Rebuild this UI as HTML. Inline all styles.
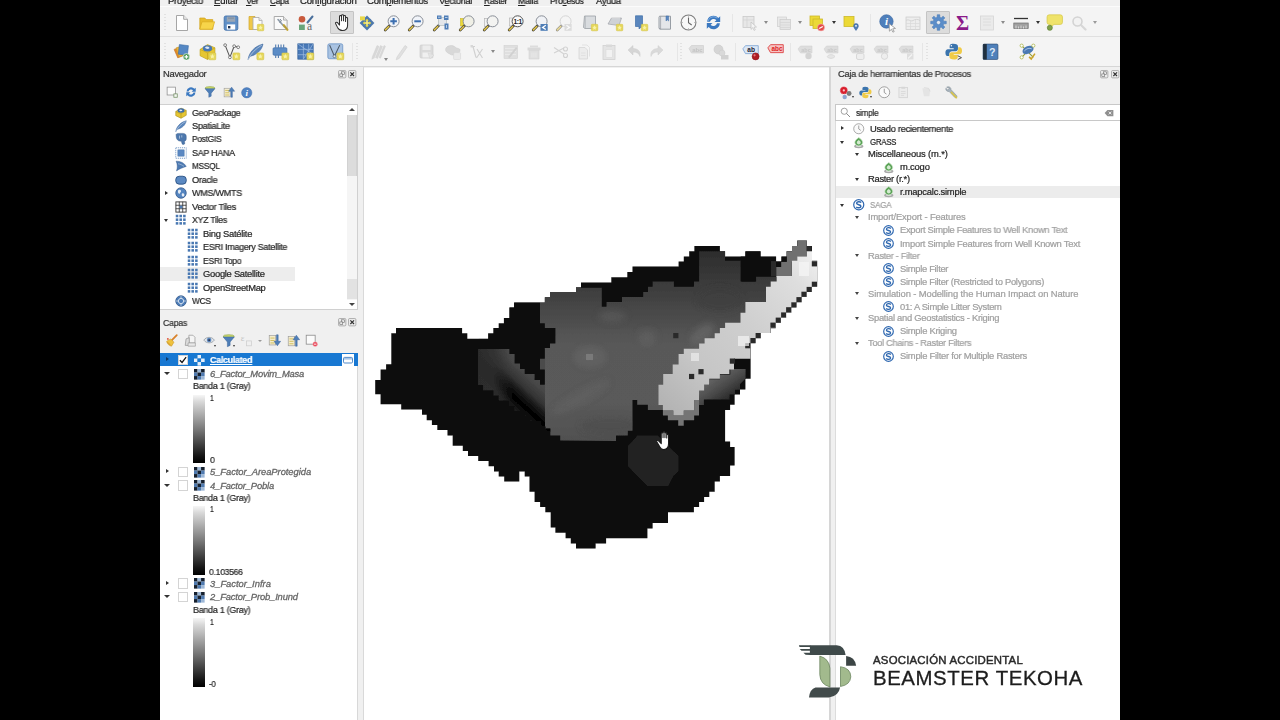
<!DOCTYPE html>
<html lang="es">
<head>
<meta charset="utf-8">
<title>QGIS</title>
<style>
html,body{margin:0;padding:0;background:#000;}
body{width:1280px;height:720px;overflow:hidden;position:relative;font-family:"Liberation Sans","DejaVu Sans",sans-serif;font-size:10px;color:#1e1e1e;}
#app{position:absolute;left:160px;top:0;width:960px;height:720px;background:#f0f0f0;overflow:hidden;}
.a{position:absolute;}
.t{position:absolute;white-space:nowrap;color:#262626;-webkit-text-stroke:0.22px currentColor;will-change:transform;}
.menu{color:#222;}
.menu u{text-decoration-thickness:1px;text-underline-offset:1px;}
.ttl{color:#333;}
.g{color:#a0a0a0;}
.it{font-style:italic;color:#666;-webkit-text-stroke:0.3px #666;}
.ic{position:absolute;width:16px;height:16px;overflow:visible;}
.ad{position:absolute;width:0;height:0;border-left:2.5px solid transparent;border-right:2.5px solid transparent;border-top:3px solid #333;}
.ar{position:absolute;width:0;height:0;border-top:2.5px solid transparent;border-bottom:2.5px solid transparent;border-left:3px solid #333;}
.cb{position:absolute;width:11px;height:11px;background:#fff;border:1px solid #ccc;box-sizing:border-box;}
.gr{position:absolute;left:33px;width:12px;background:linear-gradient(#f2f2f2,#000);}
</style>
</head>

<body>
<div id="app">
<!-- menu / toolbar separators -->
<div class="a" style="left:0;top:6.6px;width:960px;height:60px;background:#f4f4f4"></div>
<div class="a" style="left:0;top:6.4px;width:960px;height:1px;background:#fbfbfb"></div>
<div class="a" style="left:0;top:35.8px;width:960px;height:1.2px;background:#e0e0e0"></div>
<div class="a" style="left:0;top:65.8px;width:960px;height:1.4px;background:#d6d6d6"></div>
<!-- active tool highlights -->
<div class="a" style="left:170.4px;top:10.9px;width:23.7px;height:23.3px;background:#dcdcdc;border:1px solid #c4c4c4;box-sizing:border-box;border-radius:1px"></div>
<div class="a" style="left:765.9px;top:11px;width:24.2px;height:23.2px;background:#dcdcdc;border:1px solid #c4c4c4;box-sizing:border-box;border-radius:1px"></div>
<!-- navegador tree -->
<div class="a" style="left:0;top:104.2px;width:197.7px;height:205.5px;background:#fff;border:1px solid #d0d0d0;border-left:none;box-sizing:border-box"></div>
<div class="a" style="left:0;top:267.4px;width:135.4px;height:13.2px;background:#ededed"></div>
<div class="a" style="left:187.4px;top:114.6px;width:9.6px;height:185px;background:#f5f5f5"></div>
<div class="a" style="left:187.4px;top:114.6px;width:9.6px;height:61.8px;background:#dcdcdc;border-left:1px solid #d2d2d2;border-right:1px solid #d2d2d2;box-sizing:border-box"></div>
<div class="a" style="left:189px;top:108.4px;width:0;height:0;border-left:3.2px solid transparent;border-right:3.2px solid transparent;border-bottom:3px solid #444"></div>
<div class="a" style="left:189px;top:303px;width:0;height:0;border-left:3.2px solid transparent;border-right:3.2px solid transparent;border-top:3px solid #444"></div>
<div class="a" style="left:187.4px;top:278.6px;width:9.6px;height:20.6px;background:#e2e2e2"></div>
<!-- capas tree -->
<div class="a" style="left:0;top:352.5px;width:197.7px;height:368px;background:#fff;border-top:1px solid #d0d0d0;border-right:1px solid #d8d8d8;box-sizing:border-box"></div>
<div class="a" style="left:0;top:353px;width:197.7px;height:13.3px;background:#1878d2"></div>
<!-- canvas -->
<div class="a" style="left:202.5px;top:67px;width:1.3px;height:653px;background:#d9d9d9"></div>
<div class="a" style="left:203.8px;top:67.6px;width:465.4px;height:653px;background:#fff"></div>
<div class="a" style="left:669.2px;top:67px;width:1.4px;height:653px;background:#d6d6d6"></div>
<!-- toolbox -->
<div class="a" style="left:674.6px;top:104.2px;width:286px;height:16.6px;background:#fff;border:1px solid #c8c8c8;box-sizing:border-box"></div>
<div class="a" style="left:674.6px;top:120.6px;width:286px;height:600px;background:#fff;border-left:1px solid #dcdcdc;box-sizing:border-box"></div>
<div class="a" style="left:675.5px;top:185.6px;width:285px;height:12.9px;background:#ececec"></div>

<!-- map raster -->
<svg class="a" style="left:0;top:0" width="960" height="720" viewBox="160 0 960 720">
<defs>
<linearGradient id="gG" gradientUnits="userSpaceOnUse" x1="0" y1="250" x2="0" y2="441">
<stop offset="0" stop-color="#2c2c2c"/><stop offset="0.22" stop-color="#3f3f3f"/><stop offset="0.5" stop-color="#595959"/><stop offset="0.8" stop-color="#5a5a5a"/><stop offset="1" stop-color="#505050"/>
</linearGradient>
<linearGradient id="gL" gradientUnits="userSpaceOnUse" x1="512" y1="412" x2="540.8" y2="380.4">
<stop offset="0" stop-color="#1e1e1e"/><stop offset="0.1" stop-color="#1a1a1a"/><stop offset="0.24" stop-color="#060606"/><stop offset="0.34" stop-color="#060606"/><stop offset="0.48" stop-color="#1a1a1a"/><stop offset="0.62" stop-color="#343434"/><stop offset="0.85" stop-color="#464646"/><stop offset="1" stop-color="#4c4c4c"/>
</linearGradient>
<linearGradient id="gW" gradientUnits="userSpaceOnUse" x1="665" y1="405" x2="812" y2="252">
<stop offset="0" stop-color="#b4b4b4"/><stop offset="0.25" stop-color="#c6c6c6"/><stop offset="0.55" stop-color="#cfcfcf"/><stop offset="0.85" stop-color="#dedede"/><stop offset="1" stop-color="#f0f0f0"/>
</linearGradient>
<linearGradient id="gR" gradientUnits="userSpaceOnUse" x1="712" y1="376" x2="730" y2="402">
<stop offset="0" stop-color="#666"/><stop offset="0.45" stop-color="#4c4c4c"/><stop offset="1" stop-color="#222"/>
</linearGradient>
<linearGradient id="gL2" gradientUnits="userSpaceOnUse" x1="478" y1="0" x2="512" y2="0">
<stop offset="0" stop-color="#2c2c2c" stop-opacity="1"/><stop offset="0.45" stop-color="#303030" stop-opacity=".85"/><stop offset="1" stop-color="#363636" stop-opacity="0"/>
</linearGradient>
<clipPath id="cO"><polygon points="375.2,380 380.6,380 380.6,369.4 386.1,369.4 386.1,364.2 391.3,364.2 391.3,333.2 396,333.2 396,328 462.1,328 462.1,333.2 467.3,333.2 467.3,338.7 488.1,338.7 488.1,333.2 493.3,333.2 493.3,328 498.7,328 498.7,323.3 503.9,323.3 503.9,317.9 509.4,317.9 509.4,307.5 514.1,307.5 514.1,302.5 544.8,302.5 544.8,297.3 550,297.3 550,291.9 576,291.9 576,287.2 581,287.2 581,282.4 611.3,282.4 611.3,277.2 627.3,277.2 627.3,272 632.5,272 632.5,266.6 678.6,266.6 678.6,261.4 683.8,261.4 683.8,256.5 689.2,256.5 689.2,251.3 694.4,251.3 694.4,246.1 719.9,246.1 719.9,251.3 725.1,251.3 725.1,256.5 745.4,256.5 745.4,251.3 760.6,251.3 760.6,256.5 776.1,256.5 776.1,261.4 781.3,261.4 781.3,256.5 786.5,256.5 786.5,251.3 792,251.3 792,246.1 797.2,246.1 797.2,240.6 806.9,240.6 806.9,246.1 812,246.1 812,260.7 817.2,260.7 817.2,286.7 812,286.7 812,291.9 806.9,291.9 806.9,297.1 801.7,297.1 801.7,302.3 796.5,302.3 796.5,307.5 791.3,307.5 791.3,312.7 786.1,312.7 786.1,317.9 780.9,317.9 780.9,323.1 775.7,323.1 775.7,328.3 770.5,328.3 770.5,333 760.8,333 760.8,338.2 755.6,338.2 755.6,343.2 750.6,343.2 750.6,378.8 745.4,378.8 745.4,389.4 740,389.4 740,394.6 734.6,394.6 734.6,404.8 730.1,404.8 730.1,410 725.1,410 725.1,441.4 730.1,441.4 730.1,446.9 734.6,446.9 734.6,465.5 730.1,465.5 730.1,476.1 719.9,476.1 719.9,481.6 714.7,481.6 714.7,491.7 709.3,491.7 709.3,496.9 704.1,496.9 704.1,502.1 699.1,502.1 699.1,507.1 693.9,507.1 693.9,512.3 668,512.3 668,522.9 652.6,522.9 652.6,528.4 647.4,528.4 647.4,538.3 606.1,538.3 606.1,543.5 595.6,543.5 595.6,548.5 576,548.5 576,543.5 570.8,543.5 570.8,538.3 565.6,538.3 565.6,532.8 555.4,532.8 555.4,527.6 550.7,527.6 550.7,512.3 545.3,512.3 545.3,507.1 540.1,507.1 540.1,502.1 534.6,502.1 534.6,491.7 529.5,491.7 529.5,476.4 524.7,476.4 524.7,471.4 519.3,471.4 519.3,481.6 504.2,481.6 504.2,476.4 498.7,476.4 498.7,471.4 494,471.4 494,466.2 488.6,466.2 488.6,461 478.2,461 478.2,456.1 468,456.1 468,450.9 462.8,450.9 462.8,445.7 452.7,445.7 452.7,435.5 447.5,435.5 447.5,430.1 437.3,430.1 437.3,424.9 431.9,424.9 431.9,420.2 426.7,420.2 426.7,414.7 422,414.7 422,409.5 401.2,409.5 401.2,404.3 380.6,404.3 380.6,394.2 375.2,394.2"/></clipPath>
<filter id="fS" x="-30%" y="-30%" width="160%" height="160%"><feGaussianBlur stdDeviation="3.5"/></filter>
<filter id="fB" x="-2%" y="-2%" width="104%" height="104%"><feGaussianBlur stdDeviation="0.45"/></filter>
<clipPath id="cG"><polygon points="540,302.5 544.8,302.5 544.8,297.3 550,297.3 550,291.9 576,291.9 576,287.7 601.8,287.7 601.8,306.8 606.5,306.8 606.5,302 621.9,302 621.9,296.9 643.2,296.9 643.2,291.9 647.9,291.9 647.9,286.7 652.6,286.7 652.6,281.5 673.9,281.5 673.9,286.7 693.9,286.7 693.9,281.5 699.1,281.5 699.1,251.3 719.9,251.3 725.1,251.3 725.1,260.7 741.2,260.7 741.2,281.5 755.4,281.5 755.4,276.5 776.6,276.5 776.6,300 745,326 705,356 680,392 670,408 663.2,410 647.9,410 647.9,404.8 637.2,404.8 637.2,400 632.5,400 632.5,430.8 627.8,430.8 627.8,435.5 616,435.5 616,441 560.2,440.6 560.2,435.6 550.3,435.6 550.3,428.4 545,428.4 545,384 540,384 540,330"/></clipPath>
</defs>
<g filter="url(#fB)">
<!-- outline -->
<polygon id="mO" fill="#0b0b0b" points="375.2,380 380.6,380 380.6,369.4 386.1,369.4 386.1,364.2 391.3,364.2 391.3,333.2 396,333.2 396,328 462.1,328 462.1,333.2 467.3,333.2 467.3,338.7 488.1,338.7 488.1,333.2 493.3,333.2 493.3,328 498.7,328 498.7,323.3 503.9,323.3 503.9,317.9 509.4,317.9 509.4,307.5 514.1,307.5 514.1,302.5 544.8,302.5 544.8,297.3 550,297.3 550,291.9 576,291.9 576,287.2 581,287.2 581,282.4 611.3,282.4 611.3,277.2 627.3,277.2 627.3,272 632.5,272 632.5,266.6 678.6,266.6 678.6,261.4 683.8,261.4 683.8,256.5 689.2,256.5 689.2,251.3 694.4,251.3 694.4,246.1 719.9,246.1 719.9,251.3 725.1,251.3 725.1,256.5 745.4,256.5 745.4,251.3 760.6,251.3 760.6,256.5 776.1,256.5 776.1,261.4 781.3,261.4 781.3,256.5 786.5,256.5 786.5,251.3 792,251.3 792,246.1 797.2,246.1 797.2,240.6 806.9,240.6 806.9,246.1 812,246.1 812,260.7 817.2,260.7 817.2,286.7 812,286.7 812,291.9 806.9,291.9 806.9,297.1 801.7,297.1 801.7,302.3 796.5,302.3 796.5,307.5 791.3,307.5 791.3,312.7 786.1,312.7 786.1,317.9 780.9,317.9 780.9,323.1 775.7,323.1 775.7,328.3 770.5,328.3 770.5,333 760.8,333 760.8,338.2 755.6,338.2 755.6,343.2 750.6,343.2 750.6,378.8 745.4,378.8 745.4,389.4 740,389.4 740,394.6 734.6,394.6 734.6,404.8 730.1,404.8 730.1,410 725.1,410 725.1,441.4 730.1,441.4 730.1,446.9 734.6,446.9 734.6,465.5 730.1,465.5 730.1,476.1 719.9,476.1 719.9,481.6 714.7,481.6 714.7,491.7 709.3,491.7 709.3,496.9 704.1,496.9 704.1,502.1 699.1,502.1 699.1,507.1 693.9,507.1 693.9,512.3 668,512.3 668,522.9 652.6,522.9 652.6,528.4 647.4,528.4 647.4,538.3 606.1,538.3 606.1,543.5 595.6,543.5 595.6,548.5 576,548.5 576,543.5 570.8,543.5 570.8,538.3 565.6,538.3 565.6,532.8 555.4,532.8 555.4,527.6 550.7,527.6 550.7,512.3 545.3,512.3 545.3,507.1 540.1,507.1 540.1,502.1 534.6,502.1 534.6,491.7 529.5,491.7 529.5,476.4 524.7,476.4 524.7,471.4 519.3,471.4 519.3,481.6 504.2,481.6 504.2,476.4 498.7,476.4 498.7,471.4 494,471.4 494,466.2 488.6,466.2 488.6,461 478.2,461 478.2,456.1 468,456.1 468,450.9 462.8,450.9 462.8,445.7 452.7,445.7 452.7,435.5 447.5,435.5 447.5,430.1 437.3,430.1 437.3,424.9 431.9,424.9 431.9,420.2 426.7,420.2 426.7,414.7 422,414.7 422,409.5 401.2,409.5 401.2,404.3 380.6,404.3 380.6,394.2 375.2,394.2"/>
<g clip-path="url(#cO)">
<!-- main grey -->
<polygon fill="url(#gG)" points="540,302.5 544.8,302.5 544.8,297.3 550,297.3 550,291.9 576,291.9 576,287.7 601.8,287.7 601.8,306.8 606.5,306.8 606.5,302 621.9,302 621.9,296.9 643.2,296.9 643.2,291.9 647.9,291.9 647.9,286.7 652.6,286.7 652.6,281.5 673.9,281.5 673.9,286.7 693.9,286.7 693.9,281.5 699.1,281.5 699.1,251.3 719.9,251.3 725.1,251.3 725.1,260.7 741.2,260.7 741.2,281.5 755.4,281.5 755.4,276.5 776.6,276.5 776.6,300 745,326 705,356 680,392 670,408 663.2,410 647.9,410 647.9,404.8 637.2,404.8 637.2,400 632.5,400 632.5,430.8 627.8,430.8 627.8,435.5 616,435.5 616,441 560.2,440.6 560.2,435.6 550.3,435.6 550.3,428.4 545,428.4 545,384 540,384 540,330"/>
<g clip-path="url(#cG)"><g filter="url(#fS)" opacity=".9">
<ellipse cx="590" cy="357" rx="16" ry="10" fill="#6c6c6c" opacity=".55"/>
<ellipse cx="612" cy="316" rx="14" ry="6" fill="#646464" opacity=".5"/>
<ellipse cx="647" cy="337" rx="9" ry="8" fill="#6a6a6a" opacity=".5"/>
<ellipse cx="580" cy="398" rx="34" ry="6" transform="rotate(-30 580 398)" fill="#666" opacity=".5"/>
<ellipse cx="702" cy="334" rx="14" ry="7" transform="rotate(-40 702 334)" fill="#727272" opacity=".6"/>
<ellipse cx="610" cy="425" rx="30" ry="9" fill="#4a4a4a" opacity=".5"/>
<ellipse cx="720" cy="300" rx="22" ry="12" fill="#3c3c3c" opacity=".5"/>
</g></g>
<!-- left lobe -->
<polygon fill="url(#gL)" points="478,348.9 545,348.9 545,428.4 550.3,428.4 550.3,435.6 550.3,431.8 545.6,431.8 545.6,426.6 540.4,426.6 540.4,421.4 530,421.4 530,416.2 524.8,416.2 524.8,411 514.4,411 514.4,405.8 509.2,405.8 509.2,400.6 498.8,400.6 498.8,395.4 493.6,395.4 493.6,390.2 483.2,390.2 483.2,385 478,385"/>
<polygon fill="url(#gL2)" points="478,348.9 512,348.9 512,400.6 509.2,400.6 498.8,400.6 498.8,395.4 493.6,395.4 493.6,390.2 483.2,390.2 483.2,385 478,385"/>
<!-- black wedge -->
<polygon fill="#0c0c0c" points="509.4,302.5 540,302.5 540,323.3 544.8,323.3 544.8,328 555.4,328 555.4,343.4 550,343.4 550,348 544.8,348 544.8,358.7 540,358.7 540,369.4 544.8,369.4 544.8,384.7 540,384.7 540,380 534.6,380 534.6,374 524.7,374 524.7,369 520,369 520,363.5 514.6,363.5 514.6,354 509.4,354 509.4,348 478.7,348 478.7,338.7 509.4,338.7"/>
<!-- grey band right of strip -->
<polygon fill="url(#gR)" points="699,405 699,389.7 703.9,389.7 703.9,384.9 709.4,384.9 709.4,379.3 719.9,379.3 719.9,374.4 730.3,374.4 730.3,368.9 745.6,368.9 745.6,378.6 740,384.2 740,389.7 735.1,389.7 735.1,394.6 729.6,394.6 729.6,399.4 703.9,399.4 703.9,405"/>
<path fill="#747474" d="M662.9,410.6H673.3V415.4H662.9ZM683.7,410.5H694.2V415.5H683.7ZM667.8,415.4H694.2V420.3H667.8ZM678.2,420.3H683.75V425.8H678.2ZM694.2,400.1H699V415.4H694.2Z"/>
<!-- top-right tip: grey part of the strip head -->
<polygon fill="#707070" points="797.2,240.6 806.9,240.6 806.9,256.7 797.2,256.7 797.2,261.8 791.9,261.8 791.9,277 776.1,277 776.1,267 781.1,267 781.1,261.8 786.7,261.8 786.7,251.3 791.9,251.3 791.9,246.1 797.2,246.1"/>
<!-- black top-right block -->
<polygon fill="#0f0f0f" points="740.6,251.3 760.6,251.3 760.6,256.7 776.1,256.7 776.1,261.1 781.7,261.1 781.7,256.5 786.7,256.5 786.7,261.8 781.1,261.8 781.1,267 776.1,267 776.1,276.4 756.1,276.4 756.1,281.4 740.6,281.4"/>
<rect x="770.9" y="261.1" width="5.2" height="15.3" fill="#2a2a2a"/>
<!-- bright strip -->
<polygon fill="url(#gW)" points="658.5,404.8 658.5,384.7 663.2,384.7 663.2,374.1 672.7,374.1 672.7,364.6 678.6,364.6 678.6,354 683.8,354 683.8,348.8 699.1,348.8 699.1,343.4 704.6,343.4 704.6,338.2 714.7,338.2 714.7,333.2 719.9,333.2 719.9,328 725.1,328 725.1,322.8 740.5,322.8 740.5,312.7 745.4,312.7 745.4,302 766,302 766,286.7 770.7,286.7 770.7,281.5 776.6,281.5 776.6,276 792,276 792,260.7 797.2,260.7 797.2,256.5 806.9,256.5 806.9,251.3 812,251.3 812,260.7 817.2,260.7 817.2,286.7 812,286.7 812,291.9 806.9,291.9 806.9,297.1 801.7,297.1 801.7,302.3 796.5,302.3 796.5,307.5 791.3,307.5 791.3,312.7 786.1,312.7 786.1,317.9 780.9,317.9 780.9,323.1 775.7,323.1 775.7,328.3 770.5,328.3 770.5,333 760.8,333 760.8,338.2 755.6,338.2 755.6,343.2 750.6,343.2 750.6,358.7 734,358.7 734,369.4 729.4,369.4 729.4,374.1 719.9,374.1 719.9,378.8 709.3,378.8 709.3,384.7 704.1,384.7 704.1,390.6 699.1,390.6 699,400.1 694.2,400.1 694.2,410.6 683.75,410.6 683.75,415.4 673.3,415.4 673.3,410.6 662.9,410.6 662.9,405 658.5,405"/>
<!-- lighter blob -->
<polygon fill="#232323" points="637.5,435.5 658,435.5 663,441 673.5,451 678.6,456 678.6,471 673.5,476 668,486.3 647.5,486.3 642.5,481 632.5,471 627.8,466 627.8,446 632.5,441"/>
<!-- speckles -->
<g fill="#2a2a2a">
<rect x="673.2" y="333" width="5.2" height="5.2"/><rect x="698.4" y="369.1" width="5.2" height="5.2"/><rect x="689" y="373.9" width="5.2" height="5.2"/><rect x="729.8" y="358.5" width="5.2" height="5.2"/>
<rect x="806.6" y="245.8" width="5.2" height="5.2"/><rect x="811.8" y="261.2" width="5.2" height="5.2"/><rect x="811.8" y="281.7" width="5.2" height="5.2"/><rect x="806.6" y="286.9" width="5.2" height="5.2"/><rect x="801.4" y="291.7" width="5.2" height="5.2"/><rect x="796.4" y="297.1" width="5.2" height="5.2"/><rect x="791.3" y="302.3" width="5.2" height="5.2"/><rect x="786.1" y="307.2" width="5.2" height="5.2"/><rect x="781.1" y="312.4" width="5.2" height="5.2"/><rect x="775.7" y="317.6" width="5.2" height="5.2"/><rect x="770.4" y="322.6" width="5.2" height="5.2"/><rect x="755.6" y="333" width="5.2" height="5.2"/><rect x="750.4" y="338" width="5.2" height="5.2"/><rect x="745.2" y="343.1" width="5.2" height="5.2"/>
</g>
<!-- bright spots -->
<g fill="#f4f4f4"><rect x="799" y="262" width="10" height="14" opacity=".8"/><rect x="738" y="336" width="11" height="10" opacity=".7"/><rect x="691" y="353" width="8" height="8" opacity=".6"/></g>
<rect x="586" y="354" width="7" height="6" fill="#7a7a7a"/>
</g>
</g>
<!-- cursor hand -->
<g transform="translate(656.2,431.6) scale(1.2)">
<path d="M4.2,5.6V1.6c0-.9 1.5-.9 1.5,0V5V.9c0-.9 1.6-.9 1.6,0V5V1.5c0-.9 1.5-.9 1.5,0V5.4V3c0-.9 1.5-.9 1.5,0V10c0,3-1.4,5-3.9,5S3.5,13.6 2.6,12L.6,8.6C.1,7.6 1.3,7 2,7.8L4.2,10Z" fill="#fff" stroke="#1a1a1a" stroke-width=".9" stroke-linejoin="round"/>
</g>
</svg>

<!-- toolbar icons -->
<div class="a" style="left:3.5px;top:13.6px;width:2px;height:18px;background:repeating-linear-gradient(#e2e2e2 0 1px,transparent 1px 3px)"></div>
<div class="a" style="left:3.5px;top:42.8px;width:2px;height:18px;background:repeating-linear-gradient(#e2e2e2 0 1px,transparent 1px 3px)"></div>
<svg class="ic" style="left:13.7px;top:14.6px;width:16px;height:16px;" viewBox="0 0 16 16"><path d="M2.5,.5h7.2l3.8,3.8v11.2h-11z" fill="#fff" stroke="#9c9c9c" stroke-width=".9"/><path d="M9.7,.5v3.8h3.8" fill="#ededed" stroke="#9c9c9c" stroke-width=".9"/></svg>
<svg class="ic" style="left:38.9px;top:14.6px;width:16px;height:16px;" viewBox="0 0 16 16"><path d="M.8,3h5l1.4,1.6h6.6v9.6h-13z" fill="#e9bd2c" stroke="#d1a21a" stroke-width=".7"/><path d="M.8,14.2l2.2-7.4h12.6l-2.2,7.4z" fill="#f7d54a" stroke="#d8ab20" stroke-width=".7"/></svg>
<svg class="ic" style="left:63.2px;top:14.6px;width:16px;height:16px;" viewBox="0 0 16 16"><rect x="1.2" y="1" width="13.6" height="14.2" rx="1.6" fill="#5f8fc6" stroke="#3f70aa" stroke-width=".9"/><rect x="3.8" y="1.6" width="8.4" height="5.2" fill="#98a6b6"/><rect x="5" y="2.6" width="6" height="1" fill="#7d8c9e"/><rect x="3.8" y="9.4" width="8.4" height="5.2" fill="#fff"/><rect x="5" y="11" width="2.4" height="2.4" fill="#1f3352"/></svg>
<svg class="ic" style="left:87.6px;top:14.6px;width:16px;height:16px;" viewBox="0 0 16 16"><path d="M1,1.5h6v3h1v10h-7z" fill="#efc84a" stroke="#d0a528" stroke-width=".7"/><path d="M5,2.5h6l3,3v9h-9z" fill="#fbfbfb" stroke="#a8a8a8" stroke-width=".8"/><path d="M11,2.5v3h3" fill="#e8e8e8" stroke="#a8a8a8" stroke-width=".7"/><rect x="9.3" y="9.3" width="6.5" height="6.5" rx=".8" fill="#e6d75a" stroke="#d2c040" stroke-width=".5"/><path d="M12.55,10.2l.7,1.5 1.6.2-1.2,1.1.3,1.7-1.4-.8-1.4.8.3-1.7-1.2-1.1 1.6-.2z" fill="#f8f2a8"/></svg>
<svg class="ic" style="left:112.7px;top:14.6px;width:16px;height:16px;" viewBox="0 0 16 16"><path d="M1.2,1.5h9.3l3.6,3.6v9.4h-12.9z" fill="#fafafa" stroke="#a2a2a2" stroke-width=".9"/><path d="M10.5,1.5v3.6h3.6" fill="#e6e6e6" stroke="#a2a2a2" stroke-width=".8"/><path d="M5,4.5l6.5,7.5" stroke="#8c9aa8" stroke-width="1.6" stroke-linecap="round"/><path d="M7,4l1.5,2-2,1.5" fill="none" stroke="#7a8794" stroke-width="1"/><path d="M10.8,10.2l3.6,4.6" stroke="#c8ac42" stroke-width="2.2" stroke-linecap="round"/><path d="M10.8,10.2l3.6,4.6" stroke="#8a7a32" stroke-width=".5"/></svg>
<svg class="ic" style="left:137.5px;top:14.6px;width:16px;height:16px;" viewBox="0 0 16 16"><circle cx="4" cy="4.2" r="3.3" fill="#c85a3c"/><rect x="1" y="9.6" width="5.8" height="5.4" fill="#6aa57a"/><path d="M9.5,7.5l5-6" stroke="#4a6f9c" stroke-width="2" stroke-linecap="round"/><text x="9" y="15.4" font-family="Liberation Serif,serif" font-size="11.5" fill="#666">a</text></svg>
<svg class="ic" style="left:174.1px;top:14.1px;width:17px;height:17px;" viewBox="0 0 16 16"><path d="M5.2,7V2.4c0-1.2 1.9-1.2 1.9,0V6.4 1.5c0-1.2 1.9-1.2 1.9,0V6.4 2.2c0-1.2 1.9-1.2 1.9,0V7 4.1c0-1.2 1.9-1.2 1.9,0V10.6c0,3.4-1.8,5-4.8,5-2.6,0-3.7-1.2-4.7-3L1.6,9.2C.9,8 2.400,7.200 3.300,8.200L5.200,10.400Z" fill="#fff" stroke="#2b2b2b" stroke-width=".95" stroke-linejoin="round"/></svg>
<svg class="ic" style="left:199.0px;top:14.6px;width:16px;height:16px;" viewBox="0 0 16 16"><path d="M8,.6L15.400,8 8,15.400.6,8Z" fill="#4e79ad"/><path d="M8,3.800L12.200,8 8,12.200 3.800,8Z" fill="#e9d84a"/><path d="M4.300,4.300L8,8M11.700,4.300L8,8M4.300,11.700L8,8M11.700,11.700L8,8" stroke="#4e79ad" stroke-width="1.600"/><rect x="1" y="1.400" width="5" height="4" fill="#e9d84a"/><path d="M8,5.800L10.200,8 8,10.200 5.800,8Z" fill="#f3ea86"/></svg>
<svg class="ic" style="left:223.7px;top:14.6px;width:16px;height:16px;" viewBox="0 0 16 16"><path d="M1.2,15l4.6-4.6" stroke="#2a2a2a" stroke-width="2.6" stroke-linecap="round"/><path d="M1.3,14.9l3.4-3.4" stroke="#e0c44a" stroke-width="1.7" stroke-linecap="round"/><circle cx="9.6" cy="6.3" r="5.5" fill="#f1f4f9" stroke="#8a8f98" stroke-width="1"/><path d="M9.6,3v6.600M6.300,6.300h6.600" stroke="#3d6fb0" stroke-width="2"/></svg>
<svg class="ic" style="left:248.0px;top:14.6px;width:16px;height:16px;" viewBox="0 0 16 16"><path d="M1.2,15l4.6-4.6" stroke="#2a2a2a" stroke-width="2.6" stroke-linecap="round"/><path d="M1.3,14.9l3.4-3.4" stroke="#e0c44a" stroke-width="1.7" stroke-linecap="round"/><circle cx="9.6" cy="6.3" r="5.5" fill="#f1f4f9" stroke="#8a8f98" stroke-width="1"/><path d="M6.300,6.300h6.600" stroke="#3d6fb0" stroke-width="2"/></svg>
<svg class="ic" style="left:273.2px;top:14.6px;width:16px;height:16px;" viewBox="0 0 16 16"><path d="M1.2,15l4.6-4.6" stroke="#2a2a2a" stroke-width="2.6" stroke-linecap="round"/><path d="M1.3,14.9l3.4-3.4" stroke="#e0c44a" stroke-width="1.7" stroke-linecap="round"/><rect x="5.500" y="2.500" width="8" height="8" fill="#e3e6ea" stroke="#9aa" stroke-width=".5"/><path d="M4,.5h4.500v3.500h-4.500zM11,.5h4.500v4.500h-4.500zM11.500,8.500h4v6h-4z" fill="#4e7db6"/><path d="M5,2.200h2.500M12,2.500h2.500M13.500,10v3" stroke="#cfe0f4" stroke-width=".8"/></svg>
<svg class="ic" style="left:298.7px;top:14.6px;width:16px;height:16px;" viewBox="0 0 16 16"><rect x="1.500" y="3.500" width="5.500" height="7.500" fill="#ecd936" stroke="#c9b72a" stroke-width=".6"/><path d="M1.2,15l4.6-4.6" stroke="#2a2a2a" stroke-width="2.6" stroke-linecap="round"/><path d="M1.3,14.9l3.4-3.4" stroke="#e0c44a" stroke-width="1.7" stroke-linecap="round"/><circle cx="9.6" cy="6.3" r="5.5" fill="#efefe6" stroke="#8a8f98" stroke-width="1"/></svg>
<svg class="ic" style="left:323.0px;top:14.6px;width:16px;height:16px;" viewBox="0 0 16 16"><rect x="1.500" y="3.500" width="6" height="8" fill="#f2f2f2" stroke="#b5b5b5" stroke-width=".7"/><path d="M1.2,15l4.6-4.6" stroke="#2a2a2a" stroke-width="2.6" stroke-linecap="round"/><path d="M1.3,14.9l3.4-3.4" stroke="#e0c44a" stroke-width="1.7" stroke-linecap="round"/><circle cx="9.6" cy="6.3" r="5.5" fill="#f3f3f1" stroke="#8a8f98" stroke-width="1"/></svg>
<svg class="ic" style="left:347.5px;top:14.6px;width:16px;height:16px;" viewBox="0 0 16 16"><rect x="1.500" y="3" width="6" height="8" fill="#f2f2f2" stroke="#b5b5b5" stroke-width=".7"/><path d="M1.2,15l4.6-4.6" stroke="#2a2a2a" stroke-width="2.6" stroke-linecap="round"/><path d="M1.3,14.9l3.4-3.4" stroke="#e0c44a" stroke-width="1.7" stroke-linecap="round"/><circle cx="9.6" cy="6.3" r="5.5" fill="#fafafa" stroke="#555" stroke-width="1"/><text x="9.600" y="8.800" text-anchor="middle" font-family="Liberation Sans,sans-serif" font-weight="bold" font-size="6.600" fill="#222" letter-spacing="-.5">1:1</text></svg>
<svg class="ic" style="left:371.8px;top:14.6px;width:16px;height:16px;" viewBox="0 0 16 16"><path d="M1.2,15l4.6-4.6" stroke="#2a2a2a" stroke-width="2.6" stroke-linecap="round"/><path d="M1.3,14.9l3.4-3.4" stroke="#e0c44a" stroke-width="1.7" stroke-linecap="round"/><circle cx="9.6" cy="6.3" r="5.5" fill="#f0f2f6" stroke="#8a8f98" stroke-width="1"/><rect x="8.500" y="9" width="7.200" height="6.800" fill="#4e7db6"/><path d="M13.800,10.300l-3.200,2.100 3.200,2.100" fill="none" stroke="#fff" stroke-width="1.300"/></svg>
<svg class="ic" style="left:396.2px;top:14.6px;width:16px;height:16px;opacity:0.55;" viewBox="0 0 16 16"><path d="M1.2,15l4.6-4.6" stroke="#2a2a2a" stroke-width="2.6" stroke-linecap="round"/><path d="M1.3,14.9l3.4-3.4" stroke="#e0c44a" stroke-width="1.7" stroke-linecap="round"/><circle cx="9.6" cy="6.3" r="5.5" fill="#f6f6f6" stroke="#bbb" stroke-width="1"/><rect x="8.500" y="9" width="7.200" height="6.800" fill="#c9c9c9"/><path d="M10.400,10.300l3.200,2.100-3.200,2.100" fill="none" stroke="#fff" stroke-width="1.300"/></svg>
<svg class="ic" style="left:422.0px;top:14.6px;width:16px;height:16px;" viewBox="0 0 16 16"><path d="M2.500,1h11v12.500h-10.500l-1.500-1z" fill="#d9dcdf" stroke="#9a9fa5" stroke-width=".8"/><path d="M3.200,1v12.400" stroke="#a9aeb4" stroke-width=".8"/><rect x="9.3" y="9.3" width="6.5" height="6.5" rx=".8" fill="#e6d75a" stroke="#d2c040" stroke-width=".5"/><path d="M12.55,10.2l.7,1.5 1.6.2-1.2,1.1.3,1.7-1.4-.8-1.4.8.3-1.7-1.2-1.1 1.6-.2z" fill="#f8f2a8"/></svg>
<svg class="ic" style="left:446.8px;top:14.6px;width:16px;height:16px;" viewBox="0 0 16 16"><path d="M1,9l3.500-6h10l-2.500,7.500z" fill="#cfd2d6" stroke="#a0a4a9" stroke-width=".7"/><path d="M4.500,3l8.500,0" stroke="#eee" stroke-width=".8"/><rect x="9.3" y="9.3" width="6.5" height="6.5" rx=".8" fill="#e6d75a" stroke="#d2c040" stroke-width=".5"/><path d="M12.55,10.2l.7,1.5 1.6.2-1.2,1.1.3,1.7-1.4-.8-1.4.8.3-1.7-1.2-1.1 1.6-.2z" fill="#f8f2a8"/></svg>
<svg class="ic" style="left:472.0px;top:14.6px;width:16px;height:16px;" viewBox="0 0 16 16"><path d="M3.500,.8h7v10.500l-3.500,2.500v-2.300h-3.500z" fill="#5a86bd" stroke="#3f6ea8" stroke-width=".7"/><rect x="9.3" y="9.3" width="6.5" height="6.5" rx=".8" fill="#e6d75a" stroke="#d2c040" stroke-width=".5"/><path d="M12.55,10.2l.7,1.5 1.6.2-1.2,1.1.3,1.7-1.4-.8-1.4.8.3-1.7-1.2-1.1 1.6-.2z" fill="#f8f2a8"/></svg>
<svg class="ic" style="left:497.0px;top:14.6px;width:16px;height:16px;" viewBox="0 0 16 16"><path d="M2.500,1.200h11v13h-10.500l-1-.8v-11z" fill="#e4e6e9" stroke="#8f959c" stroke-width=".9"/><path d="M3.600,1.200v13M2,13.500h1.500" stroke="#9aa0a7" stroke-width=".8"/><path d="M9,1v5l1.300-1.200 1.300,1.200v-5z" fill="#5c88bf" stroke="#3f6ea8" stroke-width=".5"/></svg>
<svg class="ic" style="left:520.2px;top:14.1px;width:17px;height:17px;" viewBox="0 0 16 16"><circle cx="8" cy="8" r="7" fill="#f8f8f8" stroke="#7d7d7d" stroke-width="1"/><path d="M8,3.200v5l3,2.200" fill="none" stroke="#666" stroke-width="1"/><path d="M8,1.600v1M8,13.400v1M1.600,8h1M13.400,8h1" stroke="#999" stroke-width=".7"/></svg>
<svg class="ic" style="left:545.4px;top:14.1px;width:17px;height:17px;" viewBox="0 0 16 16"><path d="M2,7.200A6,6 0 0 1 12.600,3.800L14.300,2.200V7.600H8.900L10.700,5.800A3.500,3.500 0 0 0 4.700,7.200Z" fill="#3a78c0"/><path d="M14,8.800A6,6 0 0 1 3.400,12.200L1.700,13.800V8.400H7.100L5.300,10.200A3.500,3.500 0 0 0 11.300,8.800Z" fill="#3a78c0"/><path d="M3,6.500A5.200,5.200 0 0 1 11.500,4" fill="none" stroke="#8db8e6" stroke-width=".8"/></svg>
<div class="a" style="left:571.5px;top:13.6px;width:1px;height:18px;background:#e6e6e6"></div>
<svg class="ic" style="left:581.9px;top:14.6px;width:16px;height:16px;opacity:0.7;" viewBox="0 0 16 16"><rect x="1" y="1.500" width="11" height="11" fill="#e2e2e2" stroke="#b8b8b8" stroke-width=".8"/><path d="M1,5h11M5,1.500v11" stroke="#c4c4c4" stroke-width=".7"/><path d="M9,7l5.500,5-2.500.2 1.300,2.600-1.300.6-1.200-2.700-1.800,1.700z" fill="#f4f4f4" stroke="#aaa" stroke-width=".7"/></svg>
<div class="ad" style="left:604.2px;top:21.1px;border-top-color:#8a8a8a"></div>
<svg class="ic" style="left:616.4px;top:14.6px;width:16px;height:16px;opacity:0.75;" viewBox="0 0 16 16"><rect x="1.500" y="2" width="9" height="9.500" fill="#e6e6e6" stroke="#c0c0c0" stroke-width=".7"/><rect x="4" y="4.500" width="10.500" height="10" fill="#e0e0e0" stroke="#bcbcbc" stroke-width=".7"/><path d="M4,7.500h10.500M4,10h10.500M4,12.500h10.500" stroke="#cacaca" stroke-width=".7"/></svg>
<div class="ad" style="left:638.0px;top:21.1px;border-top-color:#8a8a8a"></div>
<svg class="ic" style="left:649.4px;top:14.6px;width:16px;height:16px;" viewBox="0 0 16 16"><rect x="1" y="1" width="9.500" height="9.500" fill="#ecd936" stroke="#cdb82a" stroke-width=".8"/><rect x="4" y="4" width="9.500" height="9.500" fill="#ecd936" stroke="#cdb82a" stroke-width=".8"/><circle cx="12" cy="12.400" r="3.500" fill="#e24a4a" stroke="#f6b0b0" stroke-width=".6"/><path d="M10.200,13.400l3.600-2" stroke="#fff" stroke-width="1.200"/></svg>
<div class="ad" style="left:671.7px;top:21.1px;border-top-color:#333"></div>
<svg class="ic" style="left:683.0px;top:14.6px;width:16px;height:16px;" viewBox="0 0 16 16"><rect x="1" y="1.500" width="10" height="10" fill="#ecd936" stroke="#cdb82a" stroke-width=".8"/><path d="M13,15.500c-1.500-2.200-2.400-3.300-2.400-4.600a2.400,2.400 0 0 1 4.800,0c0,1.300-.9,2.400-2.400,4.600z" fill="#4f7cb4" stroke="#3a639a" stroke-width=".5"/><circle cx="13" cy="10.800" r=".9" fill="#fff"/></svg>
<div class="a" style="left:710.0px;top:13.6px;width:1px;height:18px;background:#e6e6e6"></div>
<svg class="ic" style="left:719.0px;top:14.1px;width:17px;height:17px;" viewBox="0 0 16 16"><circle cx="7" cy="7" r="6.300" fill="#4f7fbb" stroke="#3b68a2" stroke-width=".6"/><text x="7" y="10.600" text-anchor="middle" font-family="Liberation Serif,serif" font-weight="bold" font-style="italic" font-size="10.500" fill="#fff">i</text><path d="M9.500,9l6,4.600-2.600.3 1.400,2.600-1.200.6-1.400-2.700-1.900,1.800z" fill="#fff" stroke="#8a8a8a" stroke-width=".7"/></svg>
<svg class="ic" style="left:745.0px;top:14.6px;width:16px;height:16px;opacity:0.8;" viewBox="0 0 16 16"><rect x="1" y="2" width="14" height="12.500" fill="#ececec" stroke="#c4c4c4" stroke-width=".8"/><path d="M1,5.500c2.500-2 4.500,1.500 7,0s4.500-1.500 7,0" fill="none" stroke="#c8c8c8" stroke-width=".9"/><path d="M1,8.500h14M1,11.500h14M5.500,5v9.500M10.500,5v9.500" stroke="#d2d2d2" stroke-width=".7"/></svg>
<svg class="ic" style="left:769.5px;top:14.1px;width:17px;height:17px;" viewBox="0 0 16 16"><path d="M6.82,0.69L9.18,0.69L9.29,3.17L10.51,3.67L12.33,2.00L14.00,3.67L12.33,5.49L12.83,6.71L15.31,6.82L15.31,9.18L12.83,9.29L12.33,10.51L14.00,12.33L12.33,14.00L10.51,12.33L9.29,12.83L9.18,15.31L6.82,15.31L6.71,12.83L5.49,12.33L3.67,14.00L2.00,12.33L3.67,10.51L3.17,9.29L0.69,9.18L0.69,6.82L3.17,6.71L3.67,5.49L2.00,3.67L3.67,2.00L5.49,3.67L6.71,3.17Z" fill="#5b8dc9" stroke="#4377b6" stroke-width=".5"/><circle cx="8" cy="8" r="2" fill="#e4e9f0" stroke="#4377b6" stroke-width=".6"/></svg>
<svg class="ic" style="left:794.0px;top:14.1px;width:17px;height:17px;" viewBox="0 0 16 16"><text x="8" y="14.800" text-anchor="middle" font-family="Liberation Serif,DejaVu Serif,serif" font-weight="bold" font-size="19" fill="#8b1a89">Σ</text></svg>
<svg class="ic" style="left:819.0px;top:14.6px;width:16px;height:16px;opacity:0.85;" viewBox="0 0 16 16"><rect x="1.500" y="1" width="13" height="14" fill="#e9e9e9" stroke="#d0d0d0" stroke-width=".8"/><path d="M4,4h8M4,7h8M4,10h8" stroke="#dadada" stroke-width="1"/></svg>
<div class="ad" style="left:840.5px;top:21.1px;border-top-color:#8a8a8a"></div>
<svg class="ic" style="left:853.0px;top:14.6px;width:16px;height:16px;" viewBox="0 0 16 16"><path d="M1,3.500h14" stroke="#333" stroke-width="1.300"/><rect x=".8" y="8" width="14.400" height="5.500" fill="#a0a0a0" stroke="#6e6e6e" stroke-width=".7"/><path d="M3,10.500v3M5.500,11.500v2M8,10.500v3M10.500,11.500v2M13,10.500v3" stroke="#eee" stroke-width=".7"/></svg>
<div class="ad" style="left:875.5px;top:21.1px;border-top-color:#333"></div>
<svg class="ic" style="left:885.5px;top:14.1px;width:17px;height:17px;" viewBox="0 0 16 16"><path d="M3,.8h10.500a2,2 0 0 1 2,2v5a2,2 0 0 1-2,2h-6l-3.500,3.200v-3.200h-1a2,2 0 0 1-2-2v-5a2,2 0 0 1 2-2z" fill="#efe36a" stroke="#d7c94a" stroke-width=".7"/><circle cx="3.600" cy="13" r="2.400" fill="#7fa04a" stroke="#5f7f34" stroke-width=".6"/></svg>
<svg class="ic" style="left:910.7px;top:14.6px;width:16px;height:16px;opacity:0.9;" viewBox="0 0 16 16"><circle cx="6.500" cy="6.500" r="4.500" fill="#f2f2f2" stroke="#d0d0d0" stroke-width="1.600"/><path d="M10,10l4.500,4.500" stroke="#d4d4d4" stroke-width="2.200" stroke-linecap="round"/></svg>
<div class="ad" style="left:933.1px;top:21.1px;border-top-color:#9a9a9a"></div>
<svg class="ic" style="left:13.2px;top:43.3px;width:17px;height:17px;" viewBox="0 0 16 16"><path d="M1,6l6-2.500 3.500,8-6,2.500z" fill="#e08a2c" stroke="#c07020" stroke-width=".5"/><path d="M3,4.500l7-2 2.500,8.500-7,2z" fill="#e9b33c" stroke="#c99a26" stroke-width=".5"/><path d="M6,1.500l8.500,1-1,9-8.500-1z" fill="#5588c4" stroke="#3d6ea9" stroke-width=".6"/><circle cx="12.600" cy="13" r="3.100" fill="#4c9a5a" stroke="#fff" stroke-width=".5"/><path d="M12.600,11.200v3.600M10.800,13h3.600" stroke="#fff" stroke-width="1.100"/></svg>
<svg class="ic" style="left:38.5px;top:43.3px;width:17px;height:17px;" viewBox="0 0 16 16"><path d="M1,6l7-4.500 7,3v7l-7,4-7-3.500z" fill="#e6c632" stroke="#bfa21e" stroke-width=".6"/><path d="M1,6l7,3.200 7-4.700" fill="none" stroke="#bfa21e" stroke-width=".6"/><path d="M8,9.200v6.300" stroke="#bfa21e" stroke-width=".6"/><ellipse cx="8" cy="5" rx="4.400" ry="3" fill="#4978b4"/><path d="M5.500,4.500c1-1.500 3-1.500 4-.5s-1,2-2.500,1.500z" fill="#dfe8f2"/><rect x="9.3" y="9.3" width="6.5" height="6.5" rx=".8" fill="#e6d75a" stroke="#d2c040" stroke-width=".5"/><path d="M12.55,10.2l.7,1.5 1.6.2-1.2,1.1.3,1.7-1.4-.8-1.4.8.3-1.7-1.2-1.1 1.6-.2z" fill="#f8f2a8"/></svg>
<svg class="ic" style="left:62.5px;top:43.3px;width:17px;height:17px;" viewBox="0 0 16 16"><path d="M2,2l4.500,11.500 4-10.500 3.500,1" fill="none" stroke="#555" stroke-width="1"/><circle cx="2" cy="2" r="1.300" fill="#fff" stroke="#555" stroke-width=".7"/><circle cx="6.500" cy="13.500" r="1.300" fill="#fff" stroke="#555" stroke-width=".7"/><circle cx="10.500" cy="3" r="1.300" fill="#fff" stroke="#555" stroke-width=".7"/><circle cx="14.300" cy="4" r="1.300" fill="#fff" stroke="#555" stroke-width=".7"/><rect x="9.3" y="9.3" width="6.5" height="6.5" rx=".8" fill="#e6d75a" stroke="#d2c040" stroke-width=".5"/><path d="M12.55,10.2l.7,1.5 1.6.2-1.2,1.1.3,1.7-1.4-.8-1.4.8.3-1.7-1.2-1.1 1.6-.2z" fill="#f8f2a8"/></svg>
<svg class="ic" style="left:87.1px;top:43.3px;width:17px;height:17px;" viewBox="0 0 16 16"><path d="M1,15.500c1-6 5-12 14-14.500-1,6-6,10-12,11.500z" fill="#5a86bd" stroke="#3f6a9f" stroke-width=".6"/><path d="M1,15.500c3-6 7-10 13-13.500" fill="none" stroke="#cfdcec" stroke-width=".6"/><rect x="9.3" y="9.3" width="6.5" height="6.5" rx=".8" fill="#e6d75a" stroke="#d2c040" stroke-width=".5"/><path d="M12.55,10.2l.7,1.5 1.6.2-1.2,1.1.3,1.7-1.4-.8-1.4.8.3-1.7-1.2-1.1 1.6-.2z" fill="#f8f2a8"/></svg>
<svg class="ic" style="left:112.2px;top:43.3px;width:17px;height:17px;" viewBox="0 0 16 16"><rect x="1" y="4.500" width="13" height="7" rx="1" fill="#5b8cc6" stroke="#3f6fa8" stroke-width=".7"/><path d="M3.500,1.500v3M6,1.500v3M8.500,1.500v3M11,1.500v3M3.500,11.500v2.500M6,11.500v2.500" stroke="#4a76ad" stroke-width="1"/><rect x="9.3" y="9.3" width="6.5" height="6.5" rx=".8" fill="#e6d75a" stroke="#d2c040" stroke-width=".5"/><path d="M12.55,10.2l.7,1.5 1.6.2-1.2,1.1.3,1.7-1.4-.8-1.4.8.3-1.7-1.2-1.1 1.6-.2z" fill="#f8f2a8"/></svg>
<svg class="ic" style="left:137.0px;top:43.3px;width:17px;height:17px;" viewBox="0 0 16 16"><rect x=".8" y=".8" width="14.400" height="14.400" fill="#4a7ab8" stroke="#2f5d9a" stroke-width=".7"/><path d="M.8,6h14.400M.8,11h8M6,.8v14.400M11,.8v8M.8,.8l14.400,10M15.200,.8l-9,14" stroke="#a9c3e4" stroke-width=".6"/><rect x="9.3" y="9.3" width="6.5" height="6.5" rx=".8" fill="#e6d75a" stroke="#d2c040" stroke-width=".5"/><path d="M12.55,10.2l.7,1.5 1.6.2-1.2,1.1.3,1.7-1.4-.8-1.4.8.3-1.7-1.2-1.1 1.6-.2z" fill="#f8f2a8"/></svg>
<svg class="ic" style="left:167.0px;top:43.3px;width:17px;height:17px;" viewBox="0 0 16 16"><rect x=".8" y=".8" width="14" height="14" rx="1.500" fill="#a9c3e2" stroke="#6f96c6" stroke-width=".8"/><path d="M2.500,2l4.500,10.500 5-10.500" fill="none" stroke="#4a5866" stroke-width="1"/><circle cx="7" cy="12.500" r="1.300" fill="#dfe9f4" stroke="#4a5866" stroke-width=".6"/><rect x="9.3" y="9.3" width="6.5" height="6.5" rx=".8" fill="#e6d75a" stroke="#d2c040" stroke-width=".5"/><path d="M12.55,10.2l.7,1.5 1.6.2-1.2,1.1.3,1.7-1.4-.8-1.4.8.3-1.7-1.2-1.1 1.6-.2z" fill="#f8f2a8"/></svg>
<div class="a" style="left:192.0px;top:42.8px;width:1px;height:18px;background:#e6e6e6"></div>
<div class="a" style="left:196.0px;top:42.8px;width:2px;height:18px;background:repeating-linear-gradient(#e2e2e2 0 1px,transparent 1px 3px)"></div>
<svg class="ic" style="left:209.5px;top:43.8px;width:16px;height:16px;opacity:0.85;" viewBox="0 0 16 16"><path d="M2,13.500l5-12 2,1-5,12zM5.500,13.500l5-12 2,1-5,12zM9,13.500l5-12 1.500,.7-5,12z" fill="#d4d4d4" stroke="#c6c6c6" stroke-width=".4"/><path d="M2,13.500l-.5,2 1.800-.6z" fill="#ccc"/></svg>
<div class="ad" style="left:224.0px;top:58.0px;border-top-color:#888"></div>
<svg class="ic" style="left:234.0px;top:43.8px;width:16px;height:16px;opacity:0.9;" viewBox="0 0 16 16"><path d="M3,13l8-11.500 2.200,1.500-8,11.500-3,1.300z" fill="#dedede" stroke="#cdcdcd" stroke-width=".6"/></svg>
<svg class="ic" style="left:259.0px;top:43.8px;width:16px;height:16px;opacity:0.9;" viewBox="0 0 16 16"><rect x="1" y="1" width="13" height="13" rx="1.200" fill="#d8d8d8" stroke="#c8c8c8" stroke-width=".7"/><rect x="3.500" y="1.500" width="8" height="4.500" fill="#ececec"/><rect x="3.500" y="8.500" width="8" height="5" fill="#f0f0f0"/><path d="M9,9l6,2-4,4z" fill="#e2e2e2" stroke="#d0d0d0" stroke-width=".5"/></svg>
<svg class="ic" style="left:284.5px;top:43.8px;width:16px;height:16px;opacity:0.9;" viewBox="0 0 16 16"><path d="M1,4c2-3 7-3 9-1s5,1 5,3-1,3-3,3-2,2-4,2-3-1-5-2-3-3-2-5z" fill="#d6d6d6" stroke="#c8c8c8" stroke-width=".6"/><rect x="8.600" y="8.600" width="7" height="7" rx="1" fill="#e9e9e9" stroke="#d2d2d2" stroke-width=".6"/></svg>
<svg class="ic" style="left:309.0px;top:43.8px;width:16px;height:16px;opacity:0.95;" viewBox="0 0 16 16"><path d="M2,2.500h4M4,2.500l3,11M8,5l5.500,9M13.500,5l-6,9" stroke="#d0d0d0" stroke-width="1.200" fill="none"/><rect x="1.500" y="1" width="2.500" height="2.500" fill="#d6d6d6"/></svg>
<div class="ad" style="left:330.5px;top:50.3px;border-top-color:#888"></div>
<svg class="ic" style="left:342.6px;top:43.8px;width:16px;height:16px;opacity:0.95;" viewBox="0 0 16 16"><rect x="1" y="1.500" width="13.500" height="13" fill="#dedede" stroke="#d0d0d0" stroke-width=".6"/><path d="M2,4.500h11M2,7.500h11M2,10.500h11" stroke="#ececec" stroke-width=".8"/><path d="M5,13l8-10 1.500,1.200-8,10z" fill="#d0d0d0"/></svg>
<svg class="ic" style="left:366.0px;top:43.8px;width:16px;height:16px;opacity:0.95;" viewBox="0 0 16 16"><path d="M1.500,3.500h13v3h-13z" fill="#d8d8d8"/><path d="M4,1.500h8v2h-8z" fill="#dcdcdc"/><path d="M3,6.500h10v8.500h-10z" fill="#dedede" stroke="#d0d0d0" stroke-width=".6"/><path d="M6,8.500v5M8,8.500v5M10,8.500v5" stroke="#ececec" stroke-width=".8"/></svg>
<svg class="ic" style="left:392.5px;top:43.8px;width:16px;height:16px;opacity:0.95;" viewBox="0 0 16 16"><path d="M1,3.500l10,6.500M1,9l10-5" stroke="#d2d2d2" stroke-width="1.200"/><circle cx="12.500" cy="5" r="2" fill="none" stroke="#d0d0d0" stroke-width="1.100"/><circle cx="12.500" cy="11.500" r="2" fill="none" stroke="#d0d0d0" stroke-width="1.100"/></svg>
<svg class="ic" style="left:415.7px;top:43.8px;width:16px;height:16px;opacity:0.95;" viewBox="0 0 16 16"><path d="M3,3.500h6l2.500,2.500v9h-8.500z" fill="#ececec" stroke="#d4d4d4" stroke-width=".8"/><path d="M6,1h5l2.500,2.500v9" fill="none" stroke="#dcdcdc" stroke-width=".8"/><path d="M5,9h4.500M5,11.500h4.500" stroke="#dcdcdc" stroke-width=".7"/></svg>
<svg class="ic" style="left:440.9px;top:43.8px;width:16px;height:16px;opacity:0.95;" viewBox="0 0 16 16"><rect x="2" y="1.500" width="12" height="14" fill="#e4e4e4" stroke="#d0d0d0" stroke-width=".8"/><rect x="5" y=".5" width="6" height="2.500" fill="#d8d8d8"/><rect x="5" y="5.500" width="6.500" height="8" fill="#f2f2f2" stroke="#dadada" stroke-width=".6"/></svg>
<svg class="ic" style="left:466.0px;top:43.8px;width:16px;height:16px;opacity:0.95;" viewBox="0 0 16 16"><path d="M2,6l5-4.500v3c5,0 8,3 7,8-1-3-3-4.500-7-4.500v3z" fill="#d4d4d4" stroke="#cbcbcb" stroke-width=".5"/></svg>
<svg class="ic" style="left:489.0px;top:43.8px;width:16px;height:16px;opacity:0.95;" viewBox="0 0 16 16"><path d="M14,6l-5-4.500v3c-5,0-8,3-7,8 1-3 3-4.500 7-4.500v3z" fill="#d8d8d8" stroke="#cfcfcf" stroke-width=".5"/></svg>
<div class="a" style="left:517.0px;top:42.8px;width:1px;height:18px;background:#e6e6e6"></div>
<div class="a" style="left:520.0px;top:42.8px;width:2px;height:18px;background:repeating-linear-gradient(#e2e2e2 0 1px,transparent 1px 3px)"></div>
<svg class="ic" style="left:528.0px;top:42.8px;width:16px;height:16px;opacity:0.95;" viewBox="0 0 16 16"><path d="M1,5.500l2.500-3h12v7.500h-12z" fill="#dcdcdc" stroke="#cfcfcf" stroke-width=".7"/><text x="9.400" y="8.600" text-anchor="middle" font-family="Liberation Sans,sans-serif" font-weight="bold" font-size="6" fill="#c2c2c2">abc</text></svg>
<svg class="ic" style="left:552.6px;top:43.8px;width:16px;height:16px;opacity:0.95;" viewBox="0 0 16 16"><circle cx="5.500" cy="5.500" r="4.500" fill="#d4d4d4" stroke="#c6c6c6" stroke-width=".6"/><circle cx="9" cy="9" r="3" fill="#d8d8d8" stroke="#c8c8c8" stroke-width=".5"/><rect x="8" y="11" width="7.500" height="4.500" fill="#d0d0d0"/></svg>
<div class="a" style="left:575.0px;top:42.8px;width:1px;height:18px;background:#e6e6e6"></div>
<svg class="ic" style="left:582.1px;top:43.3px;width:17px;height:17px;" viewBox="0 0 16 16"><path d="M.8,5.500l2.500-3h12v7.500h-12z" fill="#dbe7f5" stroke="#7fa5d4" stroke-width=".8"/><text x="8.600" y="8.700" text-anchor="middle" font-family="Liberation Sans,sans-serif" font-weight="bold" font-size="6.200" fill="#223">ab</text><circle cx="12.800" cy="12.600" r="3.300" fill="#b01c24" stroke="#861018" stroke-width=".5"/><circle cx="11.800" cy="11.600" r="1" fill="#e0777c"/></svg>
<svg class="ic" style="left:606.5px;top:42.3px;width:17px;height:17px;" viewBox="0 0 16 16"><path d="M.8,5.500l2.500-3h12v7.500h-12z" fill="#f6c4c4" stroke="#dd4a4a" stroke-width=".9"/><text x="9.400" y="8.700" text-anchor="middle" font-family="Liberation Sans,sans-serif" font-weight="bold" font-size="6" fill="#d22">abc</text></svg>
<div class="a" style="left:630.0px;top:42.8px;width:1px;height:18px;background:#e6e6e6"></div>
<svg class="ic" style="left:637.0px;top:43.8px;width:16px;height:16px;opacity:0.95;" viewBox="0 0 16 16"><path d="M1,5l2.500-3h11.500v7h-11.500z" fill="#dcdcdc" stroke="#d0d0d0" stroke-width=".6"/><text x="9" y="7.900" text-anchor="middle" font-family="Liberation Sans,sans-serif" font-weight="bold" font-size="5.500" fill="#c6c6c6">abc</text><circle cx="11.500" cy="12" r="3.200" fill="#d2d2d2"/></svg>
<svg class="ic" style="left:663.0px;top:43.8px;width:16px;height:16px;opacity:0.95;" viewBox="0 0 16 16"><path d="M1,5l2.500-3h11.500v7h-11.500z" fill="#dcdcdc" stroke="#d0d0d0" stroke-width=".6"/><text x="9" y="7.900" text-anchor="middle" font-family="Liberation Sans,sans-serif" font-weight="bold" font-size="5.500" fill="#c6c6c6">abc</text><path d="M4,12.500c2-2.500 6-2.500 8,0-2,2.500-6,2.500-8,0z" fill="#e6e6e6" stroke="#d0d0d0" stroke-width=".7"/></svg>
<svg class="ic" style="left:688.7px;top:43.8px;width:16px;height:16px;opacity:0.95;" viewBox="0 0 16 16"><path d="M1,5l2.500-3h11.500v7h-11.500z" fill="#dcdcdc" stroke="#d0d0d0" stroke-width=".6"/><text x="9" y="7.900" text-anchor="middle" font-family="Liberation Sans,sans-serif" font-weight="bold" font-size="5.500" fill="#c6c6c6">abc</text><rect x="7.500" y="9.500" width="7.500" height="6" rx="1.500" fill="#eee" stroke="#d0d0d0" stroke-width=".8"/></svg>
<svg class="ic" style="left:713.0px;top:43.8px;width:16px;height:16px;opacity:0.95;" viewBox="0 0 16 16"><path d="M1,5l2.500-3h11.500v7h-11.500z" fill="#dcdcdc" stroke="#d0d0d0" stroke-width=".6"/><text x="9" y="7.900" text-anchor="middle" font-family="Liberation Sans,sans-serif" font-weight="bold" font-size="5.500" fill="#c6c6c6">abc</text><circle cx="11.500" cy="12.200" r="3.200" fill="#eee" stroke="#d0d0d0" stroke-width=".8"/></svg>
<svg class="ic" style="left:737.5px;top:43.8px;width:16px;height:16px;opacity:0.95;" viewBox="0 0 16 16"><path d="M1,5l2.500-3h11.500v7h-11.500z" fill="#dcdcdc" stroke="#d0d0d0" stroke-width=".6"/><text x="9" y="7.900" text-anchor="middle" font-family="Liberation Sans,sans-serif" font-weight="bold" font-size="5.500" fill="#c6c6c6">abc</text><rect x="9" y="9.500" width="6.500" height="6" fill="#ddd"/><path d="M10,14.500l4-4" stroke="#f4f4f4" stroke-width="1.200"/></svg>
<div class="a" style="left:762.0px;top:42.8px;width:1px;height:18px;background:#e6e6e6"></div>
<div class="a" style="left:766.0px;top:42.8px;width:2px;height:18px;background:repeating-linear-gradient(#e2e2e2 0 1px,transparent 1px 3px)"></div>
<svg class="ic" style="left:784.5px;top:43.3px;width:17px;height:17px;" viewBox="0 0 16 16"><path d="M7.800,.8c-3,0-3.400,1.300-3.400,2.400v1.800h3.800v.8h-5.400c-1.600,0-2.400,1.300-2.400,3.300s.8,3.200 2.200,3.200h1.400v-2c0-1.500 1.200-2.600 2.600-2.600h3.600c1.200,0 2-.9 2-2v-2.500c0-1.300-1.200-2.400-4.400-2.400z" fill="#3b74ad"/><circle cx="6" cy="2.600" r=".7" fill="#fff"/><path d="M8.600,15.600c3,0 3.400-1.300 3.400-2.400v-1.800h-3.800v-.8h5.400c1.600,0 2.400-1.300 2.400-3.300s-.8-3.200-2.200-3.200h-1.400v2c0,1.500-1.200,2.600-2.600,2.600h-3.600c-1.200,0-2,.9-2,2v2.500c0,1.300 1.200,2.400 4.400,2.400z" fill="#f0cb47"/><path d="M12,12l3.500,1.800-3.500,1.800" fill="none" stroke="#444" stroke-width=".9"/></svg>
<svg class="ic" style="left:822.1px;top:43.3px;width:17px;height:17px;" viewBox="0 0 16 16"><rect x="1" y="1" width="14" height="14.500" rx="1" fill="#4f80ba" stroke="#2b4a70" stroke-width=".6"/><rect x="1" y="1" width="3.500" height="14.500" fill="#20303f"/><text x="9.600" y="12" text-anchor="middle" font-family="Liberation Sans,sans-serif" font-weight="bold" font-size="10" fill="#dfeaf6">?</text></svg>
<svg class="ic" style="left:858.5px;top:43.3px;width:17px;height:17px;" viewBox="0 0 16 16"><path d="M2.500,2.500l11,11M13.500,2.500l-11,11" stroke="#8c9a3a" stroke-width="1"/><ellipse cx="8.500" cy="6.500" rx="5.500" ry="3.600" transform="rotate(-25 8.500 6.500)" fill="#4a79b3"/><path d="M5,7.500c2-2.500 5-3 7-2" fill="none" stroke="#b8cfe8" stroke-width=".8"/><circle cx="2.500" cy="2.500" r="1.500" fill="#fff" stroke="#a5b040" stroke-width=".7"/><circle cx="13.500" cy="2.500" r="1.500" fill="#fff" stroke="#a5b040" stroke-width=".7"/><circle cx="2.500" cy="13.500" r="1.500" fill="#fff" stroke="#a5b040" stroke-width=".7"/><path d="M9.500,13l2,2 3.500-5" fill="none" stroke="#c9a52c" stroke-width="1.500"/></svg>

<!-- panel icons -->
<svg class="ic" style="left:177.7px;top:69.7px;width:8.4px;height:8.4px;" viewBox="0 0 16 16"><rect x="1" y="1" width="14" height="14" rx="2" fill="#ececec" stroke="#8a8a8a" stroke-width="1.2"/><rect x="7" y="3.500" width="5.500" height="5" fill="none" stroke="#666" stroke-width="1.100"/><rect x="3.500" y="7.500" width="5.500" height="5" fill="#ececec" stroke="#666" stroke-width="1.100"/></svg>
<svg class="ic" style="left:188.1px;top:69.7px;width:8.4px;height:8.4px;" viewBox="0 0 16 16"><rect x="1" y="1" width="14" height="14" rx="2" fill="#ececec" stroke="#8a8a8a" stroke-width="1.2"/><path d="M4.500,4.500l7,7M11.500,4.500l-7,7" stroke="#333" stroke-width="2.200"/></svg>
<svg class="ic" style="left:177.7px;top:318.3px;width:8.4px;height:8.4px;" viewBox="0 0 16 16"><rect x="1" y="1" width="14" height="14" rx="2" fill="#ececec" stroke="#8a8a8a" stroke-width="1.2"/><rect x="7" y="3.500" width="5.500" height="5" fill="none" stroke="#666" stroke-width="1.100"/><rect x="3.500" y="7.500" width="5.500" height="5" fill="#ececec" stroke="#666" stroke-width="1.100"/></svg>
<svg class="ic" style="left:188.1px;top:318.3px;width:8.4px;height:8.4px;" viewBox="0 0 16 16"><rect x="1" y="1" width="14" height="14" rx="2" fill="#ececec" stroke="#8a8a8a" stroke-width="1.2"/><path d="M4.500,4.500l7,7M11.500,4.500l-7,7" stroke="#333" stroke-width="2.200"/></svg>
<svg class="ic" style="left:940.3px;top:70.1px;width:8.4px;height:8.4px;" viewBox="0 0 16 16"><rect x="1" y="1" width="14" height="14" rx="2" fill="#ececec" stroke="#8a8a8a" stroke-width="1.2"/><rect x="7" y="3.500" width="5.500" height="5" fill="none" stroke="#666" stroke-width="1.100"/><rect x="3.500" y="7.500" width="5.500" height="5" fill="#ececec" stroke="#666" stroke-width="1.100"/></svg>
<svg class="ic" style="left:950.8px;top:70.1px;width:8.4px;height:8.4px;" viewBox="0 0 16 16"><rect x="1" y="1" width="14" height="14" rx="2" fill="#ececec" stroke="#8a8a8a" stroke-width="1.2"/><path d="M4.500,4.500l7,7M11.500,4.500l-7,7" stroke="#333" stroke-width="2.200"/></svg>
<svg class="ic" style="left:5.7px;top:86.3px;width:12px;height:12px;" viewBox="0 0 16 16"><rect x="1.500" y="1.500" width="11" height="10.500" fill="#fbfbfb" stroke="#8c8c8c" stroke-width="1"/><rect x="10.500" y="10.500" width="4.500" height="4.500" fill="#f4f7f2" stroke="#6e8c5e" stroke-width="1"/></svg>
<svg class="ic" style="left:25.2px;top:86.3px;width:12px;height:12px;" viewBox="0 0 16 16"><path d="M2,7.200A6,6 0 0 1 12.600,3.800L14.300,2.200V7.600H8.900L10.700,5.800A3.500,3.500 0 0 0 4.700,7.200Z" fill="#3a78c0"/><path d="M14,8.800A6,6 0 0 1 3.400,12.200L1.700,13.800V8.400H7.100L5.300,10.200A3.500,3.500 0 0 0 11.300,8.800Z" fill="#3a78c0"/></svg>
<svg class="ic" style="left:43.5px;top:86.3px;width:12px;height:12px;" viewBox="0 0 16 16"><ellipse cx="8" cy="2.800" rx="6.600" ry="2" fill="#c9d86a" stroke="#8aa03c" stroke-width=".7"/><path d="M1.400,3.500l5,6v5.500l3.200-1.500v-4l5-6z" fill="#4f7fb8" stroke="#3a659c" stroke-width=".6"/></svg>
<svg class="ic" style="left:62.8px;top:86.3px;width:12px;height:12px;" viewBox="0 0 16 16"><rect x="1.500" y="3" width="8" height="11.500" fill="#f4eccc" stroke="#9a9a9a" stroke-width=".8"/><path d="M3,6h5M3,9h5M3,12h5" stroke="#c9b54a" stroke-width="1"/><path d="M10.500,15v-8h-3l4-5.500 4,5.500h-3v8z" fill="#4f7fb8" stroke="#35609a" stroke-width=".6"/></svg>
<svg class="ic" style="left:81.1px;top:86.5px;width:11.5px;height:11.5px;" viewBox="0 0 16 16"><circle cx="8" cy="8" r="7.200" fill="#4f82c2" stroke="#3a68a6" stroke-width=".6"/><text x="8" y="12.400" text-anchor="middle" font-family="Liberation Serif,serif" font-weight="bold" font-style="italic" font-size="12.500" fill="#fff">i</text></svg>
<svg class="ic" style="left:14.8px;top:106.5px;width:12px;height:12px;" viewBox="0 0 16 16"><path d="M1,6l7-4.500 7,3v6.500l-7,4-7-3.500z" fill="#e6c632" stroke="#a88f1c" stroke-width=".8"/><path d="M1,6l7,3.200 7-4.700M8,9.200v5.800" fill="none" stroke="#a88f1c" stroke-width=".7"/><ellipse cx="8" cy="4.800" rx="4.600" ry="3" fill="#3f6da8"/><path d="M5.500,4.500c1-1.500 3-1.500 4-.5s-1,2-2.500,1.500z" fill="#e4ecf4"/></svg>
<svg class="ic" style="left:14.8px;top:120.0px;width:12px;height:12px;" viewBox="0 0 16 16"><path d="M1,15.500c1-6 5-12 14-14.500-1,6-6,10-12,11.500z" fill="#5a86bd" stroke="#3f6a9f" stroke-width=".7"/><path d="M1,15.500c3-6 7-10 13-13.500" fill="none" stroke="#dbe5f1" stroke-width=".7"/></svg>
<svg class="ic" style="left:14.8px;top:133.4px;width:12px;height:12px;" viewBox="0 0 16 16"><path d="M1.500,2c0-1 2-1.500 4-1.500h5c3,0 4.500,1.500 4.500,4v3c0,2-1,3-2.500,3.500l.5,2.500c.3,1.500-2.500,2.500-3.500,1l-1-3.500c-3,0-5-1-6-3-1-2-1-4-1-6z" fill="#4d78ad" stroke="#355c8e" stroke-width=".6"/><path d="M6,3.500v4M9,3v3" stroke="#c8d8ea" stroke-width=".9"/></svg>
<svg class="ic" style="left:14.8px;top:146.9px;width:12px;height:12px;" viewBox="0 0 16 16"><rect x="1" y="1" width="14" height="14" fill="none" stroke="#4f7db6" stroke-width="1" stroke-dasharray="1.500 1.200"/><rect x="3.800" y="3.800" width="8.400" height="8.400" fill="#5a88c2" stroke="#3f6ea8" stroke-width=".6"/></svg>
<svg class="ic" style="left:14.8px;top:160.4px;width:12px;height:12px;" viewBox="0 0 16 16"><path d="M1.500,1.500c6,0 11,2.500 13.500,7-4,1.500-9,3-13,6 1.500-4.500 1.500-8.500-.5-13z" fill="#4d7ab2" stroke="#34598c" stroke-width=".6"/><path d="M4,5c3,.5 6,1.800 8,3.500" fill="none" stroke="#c2d3e8" stroke-width=".8"/></svg>
<svg class="ic" style="left:14.8px;top:173.8px;width:12px;height:12px;" viewBox="0 0 16 16"><rect x="1" y="3" width="14" height="10.500" rx="4.500" fill="#5b89c2" stroke="#2f5688" stroke-width="1.300"/></svg>
<svg class="ic" style="left:14.8px;top:187.3px;width:12px;height:12px;" viewBox="0 0 16 16"><circle cx="8" cy="8" r="7" fill="#5585c0" stroke="#2f5688" stroke-width="1"/><path d="M4,4.500c1.500-1.500 3.500-1 4,.5s-1,2-1.500,3.500-2.500-.5-2.500-2zM9.500,8.500c1.500-.5 3,.5 3,2s-1.500,2.500-2.500,2-1.500-3.500-.5-4z" fill="#e6edf5"/></svg>
<svg class="ic" style="left:14.8px;top:200.7px;width:12px;height:12px;" viewBox="0 0 16 16"><rect x="1.200" y="1.200" width="13.600" height="13.600" fill="#fff" stroke="#333" stroke-width="1.200"/><path d="M5.700,1v14M10.300,1v14M1,5.700h14M1,10.300h14" stroke="#333" stroke-width="1.100"/><rect x="6.200" y="6.200" width="3.600" height="3.600" fill="#4f7db6"/></svg>
<svg class="ic" style="left:14.8px;top:214.2px;width:12px;height:12px;" viewBox="0 0 16 16"><rect x="1.0" y="1.0" width="3.400" height="3.400" fill="#4978b2"/><rect x="1.0" y="5.9" width="3.400" height="3.400" fill="#4978b2"/><rect x="1.0" y="10.8" width="3.400" height="3.400" fill="#4978b2"/><rect x="5.9" y="1.0" width="3.400" height="3.400" fill="#4978b2"/><rect x="5.9" y="5.9" width="3.400" height="3.400" fill="#4978b2"/><rect x="5.9" y="10.8" width="3.400" height="3.400" fill="#4978b2"/><rect x="10.8" y="1.0" width="3.400" height="3.400" fill="#4978b2"/><rect x="10.8" y="5.9" width="3.400" height="3.400" fill="#4978b2"/><rect x="10.8" y="10.8" width="3.400" height="3.400" fill="#4978b2"/></svg>
<svg class="ic" style="left:27.0px;top:227.7px;width:12px;height:12px;" viewBox="0 0 16 16"><rect x="1.0" y="1.0" width="3.400" height="3.400" fill="#4978b2"/><rect x="1.0" y="5.9" width="3.400" height="3.400" fill="#4978b2"/><rect x="1.0" y="10.8" width="3.400" height="3.400" fill="#4978b2"/><rect x="5.9" y="1.0" width="3.400" height="3.400" fill="#4978b2"/><rect x="5.9" y="5.9" width="3.400" height="3.400" fill="#4978b2"/><rect x="5.9" y="10.8" width="3.400" height="3.400" fill="#4978b2"/><rect x="10.8" y="1.0" width="3.400" height="3.400" fill="#4978b2"/><rect x="10.8" y="5.9" width="3.400" height="3.400" fill="#4978b2"/><rect x="10.8" y="10.8" width="3.400" height="3.400" fill="#4978b2"/></svg>
<svg class="ic" style="left:27.0px;top:241.1px;width:12px;height:12px;" viewBox="0 0 16 16"><rect x="1.0" y="1.0" width="3.400" height="3.400" fill="#4978b2"/><rect x="1.0" y="5.9" width="3.400" height="3.400" fill="#4978b2"/><rect x="1.0" y="10.8" width="3.400" height="3.400" fill="#4978b2"/><rect x="5.9" y="1.0" width="3.400" height="3.400" fill="#4978b2"/><rect x="5.9" y="5.9" width="3.400" height="3.400" fill="#4978b2"/><rect x="5.9" y="10.8" width="3.400" height="3.400" fill="#4978b2"/><rect x="10.8" y="1.0" width="3.400" height="3.400" fill="#4978b2"/><rect x="10.8" y="5.9" width="3.400" height="3.400" fill="#4978b2"/><rect x="10.8" y="10.8" width="3.400" height="3.400" fill="#4978b2"/></svg>
<svg class="ic" style="left:27.0px;top:254.6px;width:12px;height:12px;" viewBox="0 0 16 16"><rect x="1.0" y="1.0" width="3.400" height="3.400" fill="#4978b2"/><rect x="1.0" y="5.9" width="3.400" height="3.400" fill="#4978b2"/><rect x="1.0" y="10.8" width="3.400" height="3.400" fill="#4978b2"/><rect x="5.9" y="1.0" width="3.400" height="3.400" fill="#4978b2"/><rect x="5.9" y="5.9" width="3.400" height="3.400" fill="#4978b2"/><rect x="5.9" y="10.8" width="3.400" height="3.400" fill="#4978b2"/><rect x="10.8" y="1.0" width="3.400" height="3.400" fill="#4978b2"/><rect x="10.8" y="5.9" width="3.400" height="3.400" fill="#4978b2"/><rect x="10.8" y="10.8" width="3.400" height="3.400" fill="#4978b2"/></svg>
<svg class="ic" style="left:27.0px;top:268.1px;width:12px;height:12px;" viewBox="0 0 16 16"><rect x="1.0" y="1.0" width="3.400" height="3.400" fill="#4978b2"/><rect x="1.0" y="5.9" width="3.400" height="3.400" fill="#4978b2"/><rect x="1.0" y="10.8" width="3.400" height="3.400" fill="#4978b2"/><rect x="5.9" y="1.0" width="3.400" height="3.400" fill="#4978b2"/><rect x="5.9" y="5.9" width="3.400" height="3.400" fill="#4978b2"/><rect x="5.9" y="10.8" width="3.400" height="3.400" fill="#4978b2"/><rect x="10.8" y="1.0" width="3.400" height="3.400" fill="#4978b2"/><rect x="10.8" y="5.9" width="3.400" height="3.400" fill="#4978b2"/><rect x="10.8" y="10.8" width="3.400" height="3.400" fill="#4978b2"/></svg>
<svg class="ic" style="left:27.0px;top:281.5px;width:12px;height:12px;" viewBox="0 0 16 16"><rect x="1.0" y="1.0" width="3.400" height="3.400" fill="#4978b2"/><rect x="1.0" y="5.9" width="3.400" height="3.400" fill="#4978b2"/><rect x="1.0" y="10.8" width="3.400" height="3.400" fill="#4978b2"/><rect x="5.9" y="1.0" width="3.400" height="3.400" fill="#4978b2"/><rect x="5.9" y="5.9" width="3.400" height="3.400" fill="#4978b2"/><rect x="5.9" y="10.8" width="3.400" height="3.400" fill="#4978b2"/><rect x="10.8" y="1.0" width="3.400" height="3.400" fill="#4978b2"/><rect x="10.8" y="5.9" width="3.400" height="3.400" fill="#4978b2"/><rect x="10.8" y="10.8" width="3.400" height="3.400" fill="#4978b2"/></svg>
<svg class="ic" style="left:14.8px;top:295.0px;width:12px;height:12px;" viewBox="0 0 16 16"><circle cx="8" cy="8" r="7" fill="#4d7db8" stroke="#2f5688" stroke-width="1"/><circle cx="8" cy="8" r="3.500" fill="none" stroke="#dfe8f3" stroke-width="1.200"/><path d="M8,1.500v3M8,11.500v3M1.500,8h3M11.500,8h3" stroke="#dfe8f3" stroke-width="1"/></svg>
<div class="ar" style="left:5.0px;top:190.6px;border-left-color:#333;border-top-width:2.7px;border-bottom-width:2.7px;border-left-width:3.2px"></div>
<div class="ad" style="left:3.7px;top:218.5px;border-top-color:#333;border-left-width:2.9px;border-right-width:2.9px;border-top-width:3.5px"></div>
<svg class="ic" style="left:5.3px;top:334.4px;width:13px;height:13px;" viewBox="0 0 16 16"><path d="M14.500,1.500l-6,6" stroke="#d9822b" stroke-width="2.200" stroke-linecap="round"/><path d="M2,9l5-3 4,4-3,5c-3-.5-5.500-3-6-6z" fill="#efc23c" stroke="#c9972a" stroke-width=".7"/><path d="M3,10l4,4" stroke="#c98a2a" stroke-width="1"/><circle cx="3.500" cy="6" r="1.200" fill="#e0533c"/></svg>
<svg class="ic" style="left:24.3px;top:334.4px;width:13px;height:13px;" viewBox="0 0 16 16"><path d="M6,1.500h5l2.500,2.500v7h-7.500z" fill="#f4f4f4" stroke="#9a9a9a" stroke-width=".9"/><path d="M2.500,6l4-1.500v9.500h-5z" fill="#dcdcdc" stroke="#8c8c8c" stroke-width=".8"/><path d="M5,11h9v4h-9z" fill="#e8e8e8" stroke="#999" stroke-width=".8"/></svg>
<svg class="ic" style="left:43.0px;top:334.4px;width:13px;height:13px;" viewBox="0 0 16 16"><path d="M1,7.500c3-4.500 10-4.500 13,0-3,4.500-10,4.500-13,0z" fill="#e2e6ea" stroke="#8a949e" stroke-width=".9"/><circle cx="7.500" cy="7.500" r="2.800" fill="#5a86bd"/><circle cx="7.500" cy="7.500" r="1.100" fill="#223"/></svg>
<div class="ad" style="left:53.7px;top:345.4px;border-top-color:#333;border-left-width:1.8px;border-right-width:1.8px;border-top-width:2.2px"></div>
<svg class="ic" style="left:61.8px;top:334.1px;width:13.5px;height:13.5px;" viewBox="0 0 16 16"><ellipse cx="8" cy="2.800" rx="6.600" ry="2" fill="#c9d86a" stroke="#8aa03c" stroke-width=".7"/><path d="M1.400,3.500l5,6v5.500l3.200-1.500v-4l5-6z" fill="#4f7fb8" stroke="#3a659c" stroke-width=".6"/></svg>
<div class="ad" style="left:72.7px;top:345.4px;border-top-color:#333;border-left-width:1.8px;border-right-width:1.8px;border-top-width:2.2px"></div>
<svg class="ic" style="left:80.0px;top:334.4px;width:13px;height:13px;" viewBox="0 0 16 16"><text x="1" y="9" font-family="Liberation Serif,serif" font-size="11" fill="#c4c4c4">ε</text><rect x="8" y="8.500" width="6" height="6" fill="none" stroke="#d0d0d0" stroke-width="1"/></svg>
<div class="ad" style="left:98.2px;top:339.6px;border-top-color:#9a9a9a;border-left-width:2.2px;border-right-width:2.2px;border-top-width:2.6px"></div>
<svg class="ic" style="left:108.3px;top:334.4px;width:13px;height:13px;" viewBox="0 0 16 16"><rect x="1.500" y="2" width="8" height="11.500" fill="#f4eccc" stroke="#9a9a9a" stroke-width=".8"/><path d="M3,5h5M3,8h5M3,11h5" stroke="#c9b54a" stroke-width="1"/><path d="M10.500,1v8h-3l4,5.500 4-5.500h-3v-8z" fill="#4f7fb8" stroke="#35609a" stroke-width=".6"/></svg>
<svg class="ic" style="left:127.2px;top:334.4px;width:13px;height:13px;" viewBox="0 0 16 16"><rect x="1.500" y="3" width="8" height="11.500" fill="#f4eccc" stroke="#9a9a9a" stroke-width=".8"/><path d="M3,6h5M3,9h5M3,12h5" stroke="#c9b54a" stroke-width="1"/><path d="M10.500,15v-8h-3l4-5.500 4,5.500h-3v8z" fill="#4f7fb8" stroke="#35609a" stroke-width=".6"/></svg>
<svg class="ic" style="left:145.3px;top:334.4px;width:13px;height:13px;" viewBox="0 0 16 16"><rect x="1.500" y="1.500" width="11" height="11" fill="#fbfbfb" stroke="#8c8c8c" stroke-width="1"/><circle cx="12.500" cy="12.500" r="3" fill="#e8485a" stroke="#f8c0c6" stroke-width=".6"/><path d="M11,12.500h3" stroke="#fff" stroke-width="1.100"/></svg>
<div class="a" style="left:17.7px;top:354.8px;width:10.6px;height:10.6px;background:#fff;border:1px solid #d4d4d4;box-sizing:border-box;"></div>
<svg class="ic" style="left:18.0px;top:355.1px;width:10px;height:10px;" viewBox="0 0 16 16"><path d="M3,8.500l3.500,3.500 6.500-8.500" fill="none" stroke="#111" stroke-width="2"/></svg>
<svg class="ic" style="left:33.7px;top:354.8px;width:10.6px;height:10.6px;" viewBox="0 0 16 16"><rect x="0.00" y="0.00" width="5.400" height="5.400" fill="#1979cf"/><rect x="5.33" y="0.00" width="5.400" height="5.400" fill="#e8f0fa"/><rect x="10.66" y="0.00" width="5.400" height="5.400" fill="#1979cf"/><rect x="0.00" y="5.33" width="5.400" height="5.400" fill="#e8f0fa"/><rect x="5.33" y="5.33" width="5.400" height="5.400" fill="#1979cf"/><rect x="10.66" y="5.33" width="5.400" height="5.400" fill="#e8f0fa"/><rect x="0.00" y="10.66" width="5.400" height="5.400" fill="#1979cf"/><rect x="5.33" y="10.66" width="5.400" height="5.400" fill="#e8f0fa"/><rect x="10.66" y="10.66" width="5.400" height="5.400" fill="#1979cf"/></svg>
<div class="ar" style="left:5.5px;top:357.3px;border-left-color:#123a66;border-top-width:2.8px;border-bottom-width:2.8px;border-left-width:3.4px"></div>
<div class="a" style="left:17.7px;top:368.7px;width:10.6px;height:10.6px;background:#fff;border:1px solid #d4d4d4;box-sizing:border-box;"></div>
<svg class="ic" style="left:33.7px;top:368.7px;width:10.6px;height:10.6px;" viewBox="0 0 16 16"><rect x="0.00" y="0.00" width="5.400" height="5.400" fill="#16202e"/><rect x="5.33" y="0.00" width="5.400" height="5.400" fill="#9db7d6"/><rect x="10.66" y="0.00" width="5.400" height="5.400" fill="#16202e"/><rect x="0.00" y="5.33" width="5.400" height="5.400" fill="#4f7ab0"/><rect x="5.33" y="5.33" width="5.400" height="5.400" fill="#16202e"/><rect x="10.66" y="5.33" width="5.400" height="5.400" fill="#4f7ab0"/><rect x="0.00" y="10.66" width="5.400" height="5.400" fill="#16202e"/><rect x="5.33" y="10.66" width="5.400" height="5.400" fill="#4f7ab0"/><rect x="10.66" y="10.66" width="5.400" height="5.400" fill="#9db7d6"/></svg>
<div class="ad" style="left:4.2px;top:372.2px;border-top-color:#333;border-left-width:3px;border-right-width:3px;border-top-width:3.6px"></div>
<div class="a" style="left:17.7px;top:466.7px;width:10.6px;height:10.6px;background:#fff;border:1px solid #d4d4d4;box-sizing:border-box;"></div>
<svg class="ic" style="left:33.7px;top:466.7px;width:10.6px;height:10.6px;" viewBox="0 0 16 16"><rect x="0.00" y="0.00" width="5.400" height="5.400" fill="#16202e"/><rect x="5.33" y="0.00" width="5.400" height="5.400" fill="#9db7d6"/><rect x="10.66" y="0.00" width="5.400" height="5.400" fill="#16202e"/><rect x="0.00" y="5.33" width="5.400" height="5.400" fill="#4f7ab0"/><rect x="5.33" y="5.33" width="5.400" height="5.400" fill="#16202e"/><rect x="10.66" y="5.33" width="5.400" height="5.400" fill="#4f7ab0"/><rect x="0.00" y="10.66" width="5.400" height="5.400" fill="#16202e"/><rect x="5.33" y="10.66" width="5.400" height="5.400" fill="#4f7ab0"/><rect x="10.66" y="10.66" width="5.400" height="5.400" fill="#9db7d6"/></svg>
<div class="ar" style="left:5.5px;top:469.2px;border-left-color:#333;border-top-width:2.8px;border-bottom-width:2.8px;border-left-width:3.4px"></div>
<div class="a" style="left:17.7px;top:480.4px;width:10.6px;height:10.6px;background:#fff;border:1px solid #d4d4d4;box-sizing:border-box;"></div>
<svg class="ic" style="left:33.7px;top:480.4px;width:10.6px;height:10.6px;" viewBox="0 0 16 16"><rect x="0.00" y="0.00" width="5.400" height="5.400" fill="#16202e"/><rect x="5.33" y="0.00" width="5.400" height="5.400" fill="#9db7d6"/><rect x="10.66" y="0.00" width="5.400" height="5.400" fill="#16202e"/><rect x="0.00" y="5.33" width="5.400" height="5.400" fill="#4f7ab0"/><rect x="5.33" y="5.33" width="5.400" height="5.400" fill="#16202e"/><rect x="10.66" y="5.33" width="5.400" height="5.400" fill="#4f7ab0"/><rect x="0.00" y="10.66" width="5.400" height="5.400" fill="#16202e"/><rect x="5.33" y="10.66" width="5.400" height="5.400" fill="#4f7ab0"/><rect x="10.66" y="10.66" width="5.400" height="5.400" fill="#9db7d6"/></svg>
<div class="ad" style="left:4.2px;top:483.9px;border-top-color:#333;border-left-width:3px;border-right-width:3px;border-top-width:3.6px"></div>
<div class="a" style="left:17.7px;top:578.3px;width:10.6px;height:10.6px;background:#fff;border:1px solid #d4d4d4;box-sizing:border-box;"></div>
<svg class="ic" style="left:33.7px;top:578.3px;width:10.6px;height:10.6px;" viewBox="0 0 16 16"><rect x="0.00" y="0.00" width="5.400" height="5.400" fill="#16202e"/><rect x="5.33" y="0.00" width="5.400" height="5.400" fill="#9db7d6"/><rect x="10.66" y="0.00" width="5.400" height="5.400" fill="#16202e"/><rect x="0.00" y="5.33" width="5.400" height="5.400" fill="#4f7ab0"/><rect x="5.33" y="5.33" width="5.400" height="5.400" fill="#16202e"/><rect x="10.66" y="5.33" width="5.400" height="5.400" fill="#4f7ab0"/><rect x="0.00" y="10.66" width="5.400" height="5.400" fill="#16202e"/><rect x="5.33" y="10.66" width="5.400" height="5.400" fill="#4f7ab0"/><rect x="10.66" y="10.66" width="5.400" height="5.400" fill="#9db7d6"/></svg>
<div class="ar" style="left:5.5px;top:580.8px;border-left-color:#333;border-top-width:2.8px;border-bottom-width:2.8px;border-left-width:3.4px"></div>
<div class="a" style="left:17.7px;top:591.9px;width:10.6px;height:10.6px;background:#fff;border:1px solid #d4d4d4;box-sizing:border-box;"></div>
<svg class="ic" style="left:33.7px;top:591.9px;width:10.6px;height:10.6px;" viewBox="0 0 16 16"><rect x="0.00" y="0.00" width="5.400" height="5.400" fill="#16202e"/><rect x="5.33" y="0.00" width="5.400" height="5.400" fill="#9db7d6"/><rect x="10.66" y="0.00" width="5.400" height="5.400" fill="#16202e"/><rect x="0.00" y="5.33" width="5.400" height="5.400" fill="#4f7ab0"/><rect x="5.33" y="5.33" width="5.400" height="5.400" fill="#16202e"/><rect x="10.66" y="5.33" width="5.400" height="5.400" fill="#4f7ab0"/><rect x="0.00" y="10.66" width="5.400" height="5.400" fill="#16202e"/><rect x="5.33" y="10.66" width="5.400" height="5.400" fill="#4f7ab0"/><rect x="10.66" y="10.66" width="5.400" height="5.400" fill="#9db7d6"/></svg>
<div class="ad" style="left:4.2px;top:595.4px;border-top-color:#333;border-left-width:3px;border-right-width:3px;border-top-width:3.6px"></div>
<svg class="ic" style="left:181.8px;top:354.0px;width:12px;height:12px;" viewBox="0 0 16 16"><rect x="0" y="0" width="16" height="16" fill="#fff"/><rect x="2" y="4.500" width="12" height="7.500" rx="1.500" fill="none" stroke="#4a86c8" stroke-width="1.300"/><path d="M2,6.500h12" stroke="#4a86c8" stroke-width="1"/></svg>
<div class="a" style="left:33.0px;top:394.8px;width:12.2px;height:68.5px;background:linear-gradient(#f6f6f6 0%,#d8d8d8 10%,#7a7a7a 50%,#141414 90%,#000 100%);"></div>
<div class="a" style="left:33.0px;top:506.0px;width:12.2px;height:69px;background:linear-gradient(#f6f6f6 0%,#d8d8d8 10%,#7a7a7a 50%,#141414 90%,#000 100%);"></div>
<div class="a" style="left:33.0px;top:617.7px;width:12.2px;height:69.29999999999995px;background:linear-gradient(#f6f6f6 0%,#d8d8d8 10%,#7a7a7a 50%,#141414 90%,#000 100%);"></div>
<svg class="ic" style="left:679.2px;top:85.5px;width:14px;height:14px;" viewBox="0 0 16 16"><circle cx="5.500" cy="5" r="4.200" fill="#d81e2c" stroke="#f29aa0" stroke-width=".8" stroke-dasharray="1.400 1"/><circle cx="5.500" cy="5" r="1.300" fill="#f6c6c9"/><circle cx="11.500" cy="8.500" r="2.800" fill="#7c7c7c"/><circle cx="6.500" cy="12.500" r="2.500" fill="#8fa5cf"/></svg>
<div class="ad" style="left:691.7px;top:96.4px;border-top-color:#333;border-left-width:1.8px;border-right-width:1.8px;border-top-width:2.2px"></div>
<svg class="ic" style="left:699.4px;top:86.2px;width:12.5px;height:12.5px;" viewBox="0 0 16 16"><path d="M7.800,.8c-3,0-3.400,1.300-3.400,2.400v1.800h3.800v.8h-5.400c-1.600,0-2.400,1.300-2.400,3.300s.8,3.200 2.200,3.200h1.400v-2c0-1.500 1.200-2.600 2.600-2.600h3.600c1.200,0 2-.9 2-2v-2.500c0-1.300-1.200-2.400-4.400-2.400z" fill="#3b74ad"/><path d="M8.600,15.600c3,0 3.400-1.300 3.400-2.400v-1.800h-3.800v-.8h5.400c1.600,0 2.400-1.300 2.400-3.300s-.8-3.200-2.200-3.200h-1.400v2c0,1.500-1.200,2.600-2.600,2.600h-3.600c-1.200,0-2,.9-2,2v2.500c0,1.300 1.200,2.400 4.400,2.400z" fill="#f0cb47"/></svg>
<div class="ad" style="left:709.7px;top:96.4px;border-top-color:#333;border-left-width:1.8px;border-right-width:1.8px;border-top-width:2.2px"></div>
<svg class="ic" style="left:717.8px;top:86.2px;width:12.5px;height:12.5px;" viewBox="0 0 16 16"><circle cx="8" cy="8" r="7" fill="#fafafa" stroke="#8a8a8a" stroke-width="1"/><path d="M8,3.500v4.800l2.800,2" fill="none" stroke="#8a8a8a" stroke-width="1.100"/></svg>
<svg class="ic" style="left:736.6px;top:86.2px;width:12.5px;height:12.5px;" viewBox="0 0 16 16"><rect x="2.500" y="2" width="11" height="13" fill="#ececec" stroke="#cfcfcf" stroke-width=".9"/><rect x="5.500" y="1" width="5" height="2.500" fill="#d6d6d6"/><path d="M5,7h6M5,9.500h6M5,12h4" stroke="#d4d4d4" stroke-width=".9"/></svg>
<svg class="ic" style="left:759.8px;top:86.2px;width:12.5px;height:12.5px;" viewBox="0 0 16 16"><path d="M3,3h8l2,2-1,8h-7z" fill="#e4e4e4"/><path d="M5,2l6,1 2,4" fill="none" stroke="#dadada" stroke-width="1"/></svg>
<svg class="ic" style="left:784.5px;top:86.0px;width:13px;height:13px;" viewBox="0 0 16 16"><path d="M2,1.500c2.500-1.500 5.500,0 5.500,3l7,7.500c1,1.500-.8,3.200-2.300,2.200l-7.200-7.500c-2.500.5-4.500-1.500-4-4l2.500,2.300 2-2z" fill="#a7b3bd" stroke="#7c8892" stroke-width=".6"/><path d="M8,8l6,6.200" stroke="#d9c44a" stroke-width="2.200" stroke-linecap="round"/></svg>
<svg class="ic" style="left:679.5px;top:107.3px;width:10.5px;height:10.5px;" viewBox="0 0 16 16"><circle cx="6.500" cy="6.500" r="4.700" fill="none" stroke="#8a8a8a" stroke-width="1.200"/><path d="M10,10l4.800,4.800" stroke="#8a8a8a" stroke-width="1.500" stroke-linecap="round"/></svg>
<svg class="ic" style="left:944.0px;top:107.6px;width:10px;height:10px;" viewBox="0 0 16 16"><path d="M1,8l4.500-5h9.500v10h-9.500z" fill="#8f8f8f"/><path d="M7.500,5.800l4.400,4.400M11.900,5.800l-4.400,4.400" stroke="#fff" stroke-width="1.300"/></svg>
<div class="ar" style="left:680.8px;top:126.1px;border-left-color:#333;border-top-width:2.7px;border-bottom-width:2.7px;border-left-width:3.2px"></div>
<svg class="ic" style="left:692.8px;top:123.1px;width:11.5px;height:11.5px;" viewBox="0 0 16 16"><circle cx="8" cy="8" r="7" fill="#fafafa" stroke="#8a8a8a" stroke-width="1"/><path d="M8,3.500v4.800l2.800,2" fill="none" stroke="#8a8a8a" stroke-width="1.100"/></svg>
<div class="ad" style="left:679.6px;top:140.6px;border-top-color:#333;border-left-width:2.8px;border-right-width:2.8px;border-top-width:3.4px"></div>
<svg class="ic" style="left:692.8px;top:136.6px;width:11.5px;height:11.5px;" viewBox="0 0 16 16"><ellipse cx="8" cy="13" rx="6.500" ry="2.600" fill="#a9a9a9"/><ellipse cx="8" cy="12.600" rx="4" ry="1.400" fill="#d9d9d9"/><path d="M8,.8c3.500,2.200 5.500,4.500 5.500,7s-2.500,4.700-5.500,4.700-5.500-2.200-5.500-4.700 2-4.800 5.500-7z" fill="#5aa256" stroke="#cfe8cb" stroke-width="1"/><path d="M8,4c1.800,1.200 2.800,2.400 2.800,3.800s-1.300,2.600-2.800,2.600-2.800-1.200-2.800-2.600 1-2.600 2.800-3.800z" fill="#d4ead0"/></svg>
<div class="ad" style="left:694.8px;top:152.8px;border-top-color:#333;border-left-width:2.7px;border-right-width:2.7px;border-top-width:3.2px"></div>
<svg class="ic" style="left:722.5px;top:161.7px;width:11.5px;height:11.5px;" viewBox="0 0 16 16"><ellipse cx="8" cy="13" rx="6.500" ry="2.600" fill="#a9a9a9"/><ellipse cx="8" cy="12.600" rx="4" ry="1.400" fill="#d9d9d9"/><path d="M8,.8c3.500,2.200 5.500,4.500 5.500,7s-2.500,4.700-5.500,4.700-5.500-2.200-5.500-4.700 2-4.800 5.500-7z" fill="#5aa256" stroke="#cfe8cb" stroke-width="1"/><path d="M8,4c1.800,1.200 2.800,2.400 2.800,3.800s-1.300,2.600-2.800,2.600-2.800-1.200-2.800-2.600 1-2.600 2.800-3.800z" fill="#d4ead0"/></svg>
<div class="ad" style="left:694.8px;top:177.6px;border-top-color:#333;border-left-width:2.7px;border-right-width:2.7px;border-top-width:3.2px"></div>
<svg class="ic" style="left:722.5px;top:186.2px;width:11.5px;height:11.5px;" viewBox="0 0 16 16"><ellipse cx="8" cy="13" rx="6.500" ry="2.600" fill="#a9a9a9"/><ellipse cx="8" cy="12.600" rx="4" ry="1.400" fill="#d9d9d9"/><path d="M8,.8c3.500,2.200 5.500,4.500 5.500,7s-2.500,4.700-5.500,4.700-5.500-2.200-5.500-4.700 2-4.800 5.500-7z" fill="#5aa256" stroke="#cfe8cb" stroke-width="1"/><path d="M8,4c1.800,1.200 2.800,2.400 2.800,3.800s-1.300,2.600-2.800,2.600-2.800-1.200-2.800-2.600 1-2.600 2.800-3.800z" fill="#d4ead0"/></svg>
<div class="ad" style="left:679.6px;top:203.5px;border-top-color:#333;border-left-width:2.8px;border-right-width:2.8px;border-top-width:3.4px"></div>
<svg class="ic" style="left:692.5px;top:199.4px;width:11.5px;height:11.5px;" viewBox="0 0 16 16"><circle cx="8" cy="8" r="7" fill="#fff" stroke="#2f68b0" stroke-width="1.700"/><path d="M11.500,5c-2-2-6.500-1.500-6.500,1s6,1.500 6,4-4.500,3-6.500,1" fill="none" stroke="#2f68b0" stroke-width="2"/></svg>
<div class="ad" style="left:694.8px;top:215.7px;border-top-color:#444;border-left-width:2.7px;border-right-width:2.7px;border-top-width:3.2px"></div>
<div class="ad" style="left:694.8px;top:253.9px;border-top-color:#444;border-left-width:2.7px;border-right-width:2.7px;border-top-width:3.2px"></div>
<div class="ad" style="left:694.8px;top:291.9px;border-top-color:#444;border-left-width:2.7px;border-right-width:2.7px;border-top-width:3.2px"></div>
<div class="ad" style="left:694.8px;top:316.7px;border-top-color:#444;border-left-width:2.7px;border-right-width:2.7px;border-top-width:3.2px"></div>
<div class="ad" style="left:694.8px;top:341.5px;border-top-color:#444;border-left-width:2.7px;border-right-width:2.7px;border-top-width:3.2px"></div>
<svg class="ic" style="left:722.8px;top:224.7px;width:11px;height:11px;" viewBox="0 0 16 16"><circle cx="8" cy="8" r="7" fill="#fff" stroke="#2f68b0" stroke-width="1.700"/><path d="M11.500,5c-2-2-6.500-1.500-6.500,1s6,1.500 6,4-4.500,3-6.500,1" fill="none" stroke="#2f68b0" stroke-width="2"/></svg>
<svg class="ic" style="left:722.8px;top:238.0px;width:11px;height:11px;" viewBox="0 0 16 16"><circle cx="8" cy="8" r="7" fill="#fff" stroke="#2f68b0" stroke-width="1.700"/><path d="M11.500,5c-2-2-6.500-1.500-6.500,1s6,1.500 6,4-4.500,3-6.500,1" fill="none" stroke="#2f68b0" stroke-width="2"/></svg>
<svg class="ic" style="left:722.8px;top:263.0px;width:11px;height:11px;" viewBox="0 0 16 16"><circle cx="8" cy="8" r="7" fill="#fff" stroke="#2f68b0" stroke-width="1.700"/><path d="M11.500,5c-2-2-6.500-1.500-6.500,1s6,1.500 6,4-4.500,3-6.500,1" fill="none" stroke="#2f68b0" stroke-width="2"/></svg>
<svg class="ic" style="left:722.8px;top:276.0px;width:11px;height:11px;" viewBox="0 0 16 16"><circle cx="8" cy="8" r="7" fill="#fff" stroke="#2f68b0" stroke-width="1.700"/><path d="M11.500,5c-2-2-6.500-1.500-6.500,1s6,1.500 6,4-4.500,3-6.500,1" fill="none" stroke="#2f68b0" stroke-width="2"/></svg>
<svg class="ic" style="left:722.8px;top:301.0px;width:11px;height:11px;" viewBox="0 0 16 16"><circle cx="8" cy="8" r="7" fill="#fff" stroke="#2f68b0" stroke-width="1.700"/><path d="M11.500,5c-2-2-6.500-1.500-6.500,1s6,1.500 6,4-4.500,3-6.500,1" fill="none" stroke="#2f68b0" stroke-width="2"/></svg>
<svg class="ic" style="left:722.8px;top:325.8px;width:11px;height:11px;" viewBox="0 0 16 16"><circle cx="8" cy="8" r="7" fill="#fff" stroke="#2f68b0" stroke-width="1.700"/><path d="M11.500,5c-2-2-6.500-1.500-6.500,1s6,1.500 6,4-4.500,3-6.500,1" fill="none" stroke="#2f68b0" stroke-width="2"/></svg>
<svg class="ic" style="left:722.8px;top:350.6px;width:11px;height:11px;" viewBox="0 0 16 16"><circle cx="8" cy="8" r="7" fill="#fff" stroke="#2f68b0" stroke-width="1.700"/><path d="M11.500,5c-2-2-6.500-1.500-6.500,1s6,1.500 6,4-4.500,3-6.500,1" fill="none" stroke="#2f68b0" stroke-width="2"/></svg>

<div class="t menu" style="left:8.2px;top:-5.5px;font-size:9.6px;line-height:12px;height:12px;letter-spacing:-0.30px;transform:scaleX(0.984);transform-origin:0 50%;">Pro<u>y</u>ecto</div>
<div class="t menu" style="left:53.6px;top:-5.5px;font-size:9.6px;line-height:12px;height:12px;letter-spacing:-0.11px;"><u>E</u>ditar</div>
<div class="t menu" style="left:85.5px;top:-5.5px;font-size:9.6px;line-height:12px;height:12px;letter-spacing:-0.30px;transform:scaleX(0.940);transform-origin:0 50%;"><u>V</u>er</div>
<div class="t menu" style="left:109.5px;top:-5.5px;font-size:9.6px;line-height:12px;height:12px;letter-spacing:-0.30px;transform:scaleX(0.860);transform-origin:0 50%;"><u>C</u>apa</div>
<div class="t menu" style="left:139.5px;top:-5.5px;font-size:9.6px;line-height:12px;height:12px;letter-spacing:-0.20px;">Con<u>f</u>iguración</div>
<div class="t menu" style="left:207.4px;top:-5.5px;font-size:9.6px;line-height:12px;height:12px;letter-spacing:-0.30px;transform:scaleX(0.996);transform-origin:0 50%;">Com<u>p</u>lementos</div>
<div class="t menu" style="left:279.3px;top:-5.5px;font-size:9.6px;line-height:12px;height:12px;letter-spacing:-0.30px;transform:scaleX(0.968);transform-origin:0 50%;">V<u>e</u>ctorial</div>
<div class="t menu" style="left:323.6px;top:-5.5px;font-size:9.6px;line-height:12px;height:12px;letter-spacing:-0.30px;transform:scaleX(0.877);transform-origin:0 50%;"><u>R</u>áster</div>
<div class="t menu" style="left:358.1px;top:-5.5px;font-size:9.6px;line-height:12px;height:12px;letter-spacing:-0.30px;transform:scaleX(0.928);transform-origin:0 50%;"><u>M</u>alla</div>
<div class="t menu" style="left:390.0px;top:-5.5px;font-size:9.6px;line-height:12px;height:12px;letter-spacing:-0.30px;transform:scaleX(0.896);transform-origin:0 50%;">Pro<u>c</u>esos</div>
<div class="t menu" style="left:435.7px;top:-5.5px;font-size:9.6px;line-height:12px;height:12px;letter-spacing:-0.30px;transform:scaleX(0.971);transform-origin:0 50%;">A<u>y</u>uda</div>
<div class="t ttl" style="left:2.9px;top:67.9px;font-size:9.4px;line-height:12px;height:12px;letter-spacing:-0.27px;">Navegador</div>
<div class="t ttl" style="left:3.0px;top:316.6px;font-size:9.4px;line-height:12px;height:12px;letter-spacing:-0.30px;transform:scaleX(0.937);transform-origin:0 50%;">Capas</div>
<div class="t ttl" style="left:677.6px;top:68.3px;font-size:9.4px;line-height:12px;height:12px;letter-spacing:-0.30px;transform:scaleX(0.987);transform-origin:0 50%;">Caja de herramientas de Procesos</div>
<div class="t" style="left:31.7px;top:106.5px;font-size:9.4px;line-height:12px;height:12px;letter-spacing:-0.30px;transform:scaleX(0.945);transform-origin:0 50%;">GeoPackage</div>
<div class="t" style="left:31.7px;top:120.0px;font-size:9.4px;line-height:12px;height:12px;letter-spacing:-0.30px;transform:scaleX(0.979);transform-origin:0 50%;">SpatiaLite</div>
<div class="t" style="left:31.7px;top:133.4px;font-size:9.4px;line-height:12px;height:12px;letter-spacing:-0.30px;transform:scaleX(0.899);transform-origin:0 50%;">PostGIS</div>
<div class="t" style="left:31.7px;top:146.9px;font-size:9.4px;line-height:12px;height:12px;letter-spacing:-0.30px;transform:scaleX(0.954);transform-origin:0 50%;">SAP HANA</div>
<div class="t" style="left:31.7px;top:160.4px;font-size:9.4px;line-height:12px;height:12px;letter-spacing:-0.30px;transform:scaleX(0.881);transform-origin:0 50%;">MSSQL</div>
<div class="t" style="left:31.7px;top:173.8px;font-size:9.4px;line-height:12px;height:12px;letter-spacing:-0.30px;transform:scaleX(0.980);transform-origin:0 50%;">Oracle</div>
<div class="t" style="left:31.7px;top:187.3px;font-size:9.4px;line-height:12px;height:12px;letter-spacing:-0.30px;transform:scaleX(0.966);transform-origin:0 50%;">WMS/WMTS</div>
<div class="t" style="left:31.8px;top:200.7px;font-size:9.4px;line-height:12px;height:12px;letter-spacing:-0.30px;transform:scaleX(0.981);transform-origin:0 50%;">Vector Tiles</div>
<div class="t" style="left:31.8px;top:214.2px;font-size:9.4px;line-height:12px;height:12px;letter-spacing:-0.30px;transform:scaleX(0.935);transform-origin:0 50%;">XYZ Tiles</div>
<div class="t" style="left:43.3px;top:227.7px;font-size:9.4px;line-height:12px;height:12px;letter-spacing:-0.27px;">Bing Satélite</div>
<div class="t" style="left:43.3px;top:241.1px;font-size:9.4px;line-height:12px;height:12px;letter-spacing:-0.30px;transform:scaleX(0.959);transform-origin:0 50%;">ESRI Imagery Satellite</div>
<div class="t" style="left:43.3px;top:254.6px;font-size:9.4px;line-height:12px;height:12px;letter-spacing:-0.30px;transform:scaleX(0.913);transform-origin:0 50%;">ESRI Topo</div>
<div class="t" style="left:43.3px;top:268.1px;font-size:9.4px;line-height:12px;height:12px;letter-spacing:-0.28px;">Google Satellite</div>
<div class="t" style="left:43.3px;top:281.5px;font-size:9.4px;line-height:12px;height:12px;letter-spacing:-0.28px;">OpenStreetMap</div>
<div class="t" style="left:31.8px;top:295.0px;font-size:9.4px;line-height:12px;height:12px;letter-spacing:-0.30px;transform:scaleX(0.892);transform-origin:0 50%;">WCS</div>
<div class="t" style="left:49.7px;top:354.4px;font-size:9.4px;line-height:12px;height:12px;letter-spacing:-0.30px;color:#fff;font-weight:bold;text-decoration:underline;transform:scaleX(0.950);transform-origin:0 50%;">Calculated</div>
<div class="t it" style="left:49.7px;top:368.0px;font-size:9.4px;line-height:12px;height:12px;letter-spacing:-0.21px;">6_Factor_Movim_Masa</div>
<div class="t" style="left:33.3px;top:380.2px;font-size:9.4px;line-height:12px;height:12px;letter-spacing:-0.30px;transform:scaleX(0.957);transform-origin:0 50%;">Banda 1 (Gray)</div>
<div class="t" style="left:49.6px;top:391.9px;font-size:9.4px;line-height:12px;height:12px;letter-spacing:-0.30px;transform:scaleX(0.732);transform-origin:0 50%;">1</div>
<div class="t" style="left:49.6px;top:453.6px;font-size:9.4px;line-height:12px;height:12px;letter-spacing:-0.30px;transform:scaleX(0.935);transform-origin:0 50%;">0</div>
<div class="t it" style="left:49.6px;top:466.0px;font-size:9.4px;line-height:12px;height:12px;letter-spacing:-0.05px;">5_Factor_AreaProtegida</div>
<div class="t it" style="left:49.6px;top:479.7px;font-size:9.4px;line-height:12px;height:12px;letter-spacing:-0.15px;">4_Factor_Pobla</div>
<div class="t" style="left:33.3px;top:491.7px;font-size:9.4px;line-height:12px;height:12px;letter-spacing:-0.30px;transform:scaleX(0.957);transform-origin:0 50%;">Banda 1 (Gray)</div>
<div class="t" style="left:49.6px;top:503.2px;font-size:9.4px;line-height:12px;height:12px;letter-spacing:-0.30px;transform:scaleX(0.732);transform-origin:0 50%;">1</div>
<div class="t" style="left:48.9px;top:566.0px;font-size:9.4px;line-height:12px;height:12px;letter-spacing:-0.30px;transform:scaleX(0.918);transform-origin:0 50%;">0.103566</div>
<div class="t it" style="left:49.8px;top:577.6px;font-size:9.4px;line-height:12px;height:12px;letter-spacing:-0.01px;">3_Factor_Infra</div>
<div class="t it" style="left:49.8px;top:591.2px;font-size:9.4px;line-height:12px;height:12px;letter-spacing:-0.15px;">2_Factor_Prob_Inund</div>
<div class="t" style="left:33.3px;top:603.5px;font-size:9.4px;line-height:12px;height:12px;letter-spacing:-0.30px;transform:scaleX(0.957);transform-origin:0 50%;">Banda 1 (Gray)</div>
<div class="t" style="left:49.6px;top:615.5px;font-size:9.4px;line-height:12px;height:12px;letter-spacing:-0.30px;transform:scaleX(0.732);transform-origin:0 50%;">1</div>
<div class="t" style="left:49.0px;top:677.6px;font-size:9.4px;line-height:12px;height:12px;letter-spacing:-0.30px;transform:scaleX(0.865);transform-origin:0 50%;">-0</div>
<div class="t" style="left:695.6px;top:107.3px;font-size:9.2px;line-height:12px;height:12px;letter-spacing:-0.30px;transform:scaleX(0.901);transform-origin:0 50%;">simple</div>
<div class="t" style="left:709.6px;top:122.8px;font-size:9.4px;line-height:12px;height:12px;letter-spacing:-0.30px;transform:scaleX(0.995);transform-origin:0 50%;">Usado recientemente</div>
<div class="t" style="left:709.6px;top:136.3px;font-size:9.4px;line-height:12px;height:12px;letter-spacing:-0.30px;transform:scaleX(0.836);transform-origin:0 50%;">GRASS</div>
<div class="t" style="left:707.9px;top:148.4px;font-size:9.4px;line-height:12px;height:12px;letter-spacing:-0.14px;">Miscellaneous (m.*)</div>
<div class="t" style="left:740.1px;top:161.4px;font-size:9.4px;line-height:12px;height:12px;letter-spacing:-0.18px;">m.cogo</div>
<div class="t" style="left:707.9px;top:173.2px;font-size:9.4px;line-height:12px;height:12px;letter-spacing:-0.30px;transform:scaleX(0.999);transform-origin:0 50%;">Raster (r.*)</div>
<div class="t" style="left:740.1px;top:186.0px;font-size:9.4px;line-height:12px;height:12px;letter-spacing:-0.22px;">r.mapcalc.simple</div>
<div class="t g" style="left:709.7px;top:199.2px;font-size:9.4px;line-height:12px;height:12px;letter-spacing:-0.30px;transform:scaleX(0.857);transform-origin:0 50%;">SAGA</div>
<div class="t g" style="left:707.9px;top:211.3px;font-size:9.4px;line-height:12px;height:12px;letter-spacing:-0.17px;">Import/Export - Features</div>
<div class="t g" style="left:739.7px;top:224.2px;font-size:9.4px;line-height:12px;height:12px;letter-spacing:-0.30px;transform:scaleX(0.998);transform-origin:0 50%;">Export Simple Features to Well Known Text</div>
<div class="t g" style="left:739.7px;top:237.5px;font-size:9.4px;line-height:12px;height:12px;letter-spacing:-0.24px;">Import Simple Features from Well Known Text</div>
<div class="t g" style="left:707.9px;top:249.5px;font-size:9.4px;line-height:12px;height:12px;letter-spacing:-0.30px;transform:scaleX(0.987);transform-origin:0 50%;">Raster - Filter</div>
<div class="t g" style="left:739.7px;top:262.5px;font-size:9.4px;line-height:12px;height:12px;letter-spacing:-0.30px;">Simple Filter</div>
<div class="t g" style="left:739.7px;top:275.5px;font-size:9.4px;line-height:12px;height:12px;letter-spacing:-0.28px;">Simple Filter (Restricted to Polygons)</div>
<div class="t g" style="left:707.9px;top:287.5px;font-size:9.4px;line-height:12px;height:12px;letter-spacing:-0.10px;">Simulation - Modelling the Human Impact on Nature</div>
<div class="t g" style="left:739.7px;top:300.5px;font-size:9.4px;line-height:12px;height:12px;letter-spacing:-0.30px;transform:scaleX(1.000);transform-origin:0 50%;">01: A Simple Litter System</div>
<div class="t g" style="left:707.9px;top:312.3px;font-size:9.4px;line-height:12px;height:12px;letter-spacing:-0.27px;">Spatial and Geostatistics - Kriging</div>
<div class="t g" style="left:739.7px;top:325.3px;font-size:9.4px;line-height:12px;height:12px;letter-spacing:-0.26px;">Simple Kriging</div>
<div class="t g" style="left:707.9px;top:337.1px;font-size:9.4px;line-height:12px;height:12px;letter-spacing:-0.30px;transform:scaleX(0.986);transform-origin:0 50%;">Tool Chains - Raster Filters</div>
<div class="t g" style="left:739.7px;top:350.1px;font-size:9.4px;line-height:12px;height:12px;letter-spacing:-0.25px;">Simple Filter for Multiple Rasters</div>
<div class="t" style="left:713.0px;top:653.2px;font-size:11.4px;line-height:15px;height:15px;letter-spacing:0.22px;color:#2a2a2a;-webkit-text-stroke:0.45px #2a2a2a;">ASOCIACIÓN ACCIDENTAL</div>
<div class="t" style="left:713.0px;top:665.0px;font-size:20.4px;line-height:27px;height:27px;letter-spacing:0.58px;color:#1c1c1c;-webkit-text-stroke:0.3px #1c1c1c;">BEAMSTER TEKOHA</div>
<!-- logo -->
<svg class="a" style="left:0;top:0" width="960" height="720" viewBox="0 0 960 720">
<path fill="#3f4a4a" d="M649.9,645.2 L676.7,645.2 Q684.6,645.7 685.6,655.1 L649.9,655.1 Z"/>
<path fill="#3f4a4a" d="M638.9,645.2 L650.4,645.2 L650.4,647.0 L639.5,647.0 ZM639.7,648.9 L650.4,648.9 L650.4,650.7 L641.5,650.7 ZM643.4,652.7 L650.4,652.7 L650.4,655.1 L645.6,654.7 Z"/>
<path fill="#3c4545" d="M686.1,656.0 Q694.9,656.8 696.1,665.7 L686.1,665.7 Z"/>
<path fill="#a2ba8d" stroke="#5f7a52" stroke-width=".7" d="M659.8,656.1 Q669.1,658.6 669.9,668.3 L669.9,686.9 Q660.3,684.4 659.8,674.7 Z"/>
<path fill="#a2ba8d" stroke="#5f7a52" stroke-width=".7" d="M680.5,666.7 Q690.7,668.1 690.8,676.8 Q690.3,684.8 680.5,686.5 Z"/>
<path fill="#424b4b" d="M655.5,687.5 L680.1,687.5 Q678.6,696.3 668.9,697.5 L649.0,697.5 Q649.9,689.0 655.5,687.5 Z"/>
</svg>

</div>
</body>
</html>
